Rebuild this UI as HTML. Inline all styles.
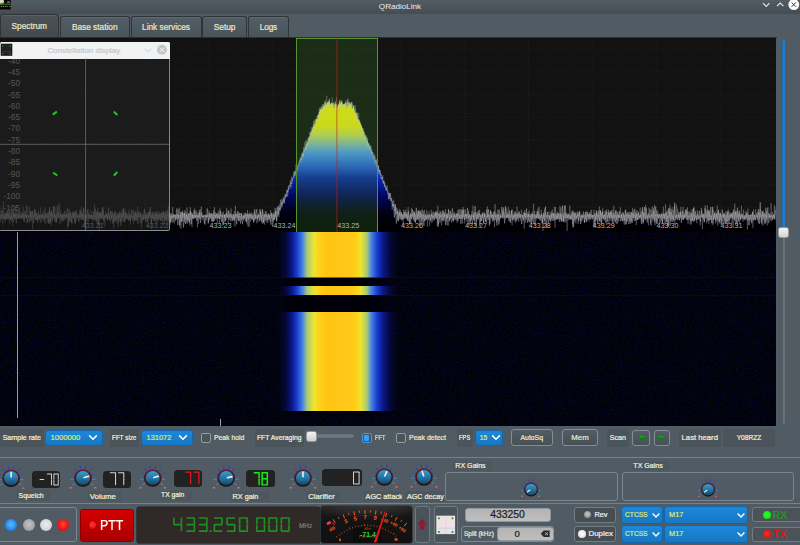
<!DOCTYPE html>
<html><head><meta charset="utf-8"><title>QRadioLink</title>
<style>
*{box-sizing:border-box;margin:0;padding:0}
html,body{width:800px;height:545px;overflow:hidden;background:#515b63;font-family:"Liberation Sans",sans-serif;}
#root{position:relative;width:800px;height:545px;overflow:hidden;background:#515b63;color:#ececd2;font-size:8px;-webkit-text-stroke:0.22px currentColor}
.abs{position:absolute}
#titlebar{left:0;top:0;width:800px;height:13.5px;background:linear-gradient(#535d65,#4a5359 60%,#454d53)}
#title{left:0;top:0;width:800px;text-align:center;color:#eceff1;font-size:8.1px;line-height:13px;height:13px;-webkit-text-stroke:0}
.tab{position:absolute;top:16px;height:20.5px;border:1px solid #2e3438;border-bottom:none;border-radius:3px 3px 0 0;background:linear-gradient(#535d65,#4a545b);color:#e9e7c6;font-size:8.3px;text-align:center;line-height:20px;box-shadow:inset 0 1px 0 #5f6971}
.tab.sel{top:13.5px;height:23.5px;background:linear-gradient(#4a5257,#444b4f);line-height:23.5px;box-shadow:inset 0 1px 0 #59636a}
#plot{left:0;top:38px;width:776px;height:194px;background:#121212;overflow:hidden}
#wf{left:0;top:232px;width:776px;height:193.5px;background:#010108;overflow:hidden}
.band{position:absolute;left:270px;width:136px;background:linear-gradient(90deg,rgba(3,3,26,0) 8px,#050838 16px,#0a1888 22px,#1a3cd0 27px,#4a8ae0 33px,#a8c878 37px,#ece430 44px,#ffd018 50px,#ffc414 56px,#ffc818 80px,#ffd018 86px,#ece430 91px,#a8c878 97px,#4a8ae0 101px,#1a3cd0 107px,#0a1888 113px,#050838 120px,rgba(3,3,26,0) 128px)}
.gap{position:absolute;left:279px;width:110px;background:linear-gradient(90deg,rgba(0,0,8,0),#00000a 14px,#00000a 96px,rgba(0,0,8,0))}
.lbl{position:absolute;height:11px;border-radius:2.5px;background:#4d575e;box-shadow:0 0 0 0.5px #566068;color:#efefd8;text-align:left;padding-left:2.6px;white-space:nowrap;overflow:hidden}
.lbl2{position:absolute;border-radius:2.5px;background:#4b545a;color:#efefd8;text-align:center;white-space:nowrap}
.combo{position:absolute;border-radius:3px;background:linear-gradient(#1c88da,#1877c2);border:1px solid #1466a8;color:#dde96e;white-space:nowrap}
.combo svg{position:absolute}
.btn{position:absolute;border-radius:3px;border:1px solid #838d94;background:linear-gradient(#525c64,#475057);color:#e8e8cc;text-align:center;white-space:nowrap}
.lcd{position:absolute;background:#222222;border-radius:3.5px}
.chk{position:absolute;width:10px;height:10px;border:1px solid #92a092;border-radius:2px;background:#4a545c}
.grp{position:absolute;border:1px solid #7b858c;border-radius:3px}
.edit{position:absolute;background:linear-gradient(#b4b4b4,#bebebe);border-radius:3px;border:1px solid #8e979d;color:#1c1c1c;text-align:center}
.led{position:absolute;border-radius:50%}
</style></head><body><div id="root">

<!-- title bar -->
<div id="titlebar" class="abs"></div>
<div id="title" class="abs">QRadioLink</div>
<svg class="abs" style="left:0;top:0" width="12" height="10" viewBox="0 0 12 10"><rect width="10.8" height="9.5" fill="#050505"/><path d="M0 0 H3.6 L4.2 2.2 L2.6 3.6 L0 4 Z" fill="#d8dcc0"/><path d="M0 3.2 L3.4 2.6 L4.2 4.4 L0 4.8 Z" fill="#6a8a3a"/><rect x="4.2" y="3.6" width="6.4" height="1.2" fill="#1a7a6a"/><rect x="7.2" y="1.4" width="2.6" height="1.4" fill="#8a9a20"/><path d="M0.8 6.4 H7.6 M9.4 6.4 H10.6" stroke="#b8a818" stroke-width="1" stroke-dasharray="1.2 0.7"/></svg>
<svg class="abs" style="left:755px;top:0" width="45" height="12" viewBox="0 0 45 12">
 <path d="M8 3.2 L11.2 6.4 L14.4 3.2" stroke="#e6e9eb" stroke-width="1.1" fill="none"/>
 <path d="M22 6.2 L25.2 3 L28.4 6.2" stroke="#e6e9eb" stroke-width="1.1" fill="none"/>
 <circle cx="38.8" cy="4.6" r="5.4" fill="#fbfbfb"/>
 <path d="M36.6 2.4 L41 6.8 M41 2.4 L36.6 6.8" stroke="#3c444a" stroke-width="1" fill="none"/>
</svg>

<!-- tabs -->
<div class="abs" style="left:0;top:36.5px;width:777px;height:1.5px;background:#2b3034"></div>
<div class="tab sel" style="left:0;width:58.5px">Spectrum</div>
<div class="tab" style="left:60px;width:69.5px">Base station</div>
<div class="tab" style="left:130.5px;width:71px">Link services</div>
<div class="tab" style="left:202px;width:45.2px">Setup</div>
<div class="tab" style="left:248px;width:40.8px;letter-spacing:-.12px">Logs</div>

<!-- spectrum plot -->
<div id="plot" class="abs">
<svg class="abs" style="left:0;top:0" width="776" height="194" viewBox="0 0 776 194">
 <defs>
  <linearGradient id="sg" x1="0" y1="0" x2="0" y2="194" gradientUnits="userSpaceOnUse">
   <stop offset="0" stop-color="#ffffff"/>
   <stop offset="0.30" stop-color="#ffff14"/>
   <stop offset="0.45" stop-color="#fffa18"/>
   <stop offset="0.50" stop-color="#d8ec60"/>
   <stop offset="0.548" stop-color="#90c8c0"/>
   <stop offset="0.595" stop-color="#529eff"/>
   <stop offset="0.66" stop-color="#2866e8"/>
   <stop offset="0.72" stop-color="#0a29b4"/>
   <stop offset="0.81" stop-color="#000766"/>
   <stop offset="0.90" stop-color="#000112"/>
   <stop offset="1" stop-color="#000000"/>
  </linearGradient>
 </defs>
 <g stroke="#202020" stroke-width="1" stroke-dasharray="1 2" fill="none">
 <line x1="81.5" y1="0" x2="81.5" y2="194" />
<line x1="145.4" y1="0" x2="145.4" y2="194" />
<line x1="209.2" y1="0" x2="209.2" y2="194" />
<line x1="273.1" y1="0" x2="273.1" y2="194" />
<line x1="336.9" y1="0" x2="336.9" y2="194" />
<line x1="400.8" y1="0" x2="400.8" y2="194" />
<line x1="464.7" y1="0" x2="464.7" y2="194" />
<line x1="528.5" y1="0" x2="528.5" y2="194" />
<line x1="592.4" y1="0" x2="592.4" y2="194" />
<line x1="656.2" y1="0" x2="656.2" y2="194" />
<line x1="720.1" y1="0" x2="720.1" y2="194" />
<line x1="0" y1="11.2" x2="776" y2="11.2" />
<line x1="0" y1="33.8" x2="776" y2="33.8" />
<line x1="0" y1="56.4" x2="776" y2="56.4" />
<line x1="0" y1="79.0" x2="776" y2="79.0" />
<line x1="0" y1="101.6" x2="776" y2="101.6" />
<line x1="0" y1="124.2" x2="776" y2="124.2" />
<line x1="0" y1="146.8" x2="776" y2="146.8" />
<line x1="0" y1="169.4" x2="776" y2="169.4" />
<line x1="0" y1="192.0" x2="776" y2="192.0" />
 </g>
 <polygon points="0,194 0.0,179.0 0.6,179.0 1.1,178.9 1.7,178.7 2.2,178.1 2.8,176.9 3.3,180.0 3.8,179.0 4.4,180.0 4.9,177.9 5.5,178.4 6.0,177.6 6.6,178.0 7.1,177.2 7.7,178.0 8.2,177.8 8.8,179.1 9.3,179.4 9.9,177.3 10.5,179.8 11.0,178.0 11.6,178.2 12.1,179.0 12.7,178.4 13.2,179.4 13.8,178.9 14.3,179.0 14.9,178.2 15.4,177.9 16.0,178.0 16.5,179.9 17.1,179.0 17.6,179.5 18.2,178.6 18.7,179.4 19.3,177.5 19.8,178.2 20.4,176.7 20.9,179.1 21.5,178.3 22.0,179.2 22.6,178.8 23.1,178.8 23.7,179.1 24.2,178.8 24.8,178.5 25.3,178.7 25.9,180.2 26.4,178.8 27.0,179.4 27.5,178.3 28.1,179.4 28.6,177.4 29.2,179.1 29.7,178.3 30.3,177.2 30.8,178.4 31.4,179.2 31.9,178.2 32.5,178.3 33.0,179.1 33.6,179.7 34.1,177.6 34.7,178.1 35.2,177.7 35.8,178.6 36.3,179.9 36.9,179.1 37.4,178.0 37.9,180.1 38.5,179.8 39.0,177.8 39.6,178.6 40.1,177.6 40.7,179.2 41.2,179.2 41.8,179.7 42.3,178.7 42.9,179.3 43.4,178.0 44.0,178.5 44.5,178.6 45.1,178.5 45.6,178.7 46.2,179.5 46.7,178.1 47.3,179.2 47.8,178.4 48.4,178.0 48.9,178.5 49.5,178.8 50.0,178.0 50.6,178.3 51.1,177.9 51.7,179.2 52.2,178.9 52.8,176.6 53.3,177.2 53.9,176.9 54.4,178.2 55.0,178.4 55.5,179.0 56.1,179.2 56.6,178.6 57.2,178.6 57.7,178.5 58.3,176.2 58.8,178.8 59.4,179.0 59.9,177.6 60.5,180.1 61.0,178.1 61.6,178.7 62.1,177.3 62.7,178.2 63.2,178.7 63.8,178.2 64.3,178.4 64.9,178.7 65.4,179.2 66.0,179.5 66.5,178.6 67.1,178.6 67.6,179.4 68.2,179.5 68.7,178.6 69.3,178.4 69.8,179.9 70.4,177.8 70.9,178.7 71.5,177.8 72.0,179.4 72.6,177.9 73.1,179.5 73.7,178.7 74.2,178.3 74.8,178.3 75.3,178.5 75.9,178.5 76.4,178.5 77.0,178.7 77.5,179.7 78.1,177.2 78.6,177.9 79.2,178.5 79.7,178.3 80.3,177.7 80.8,178.0 81.4,178.5 81.9,177.4 82.5,177.2 83.0,178.6 83.6,179.5 84.1,177.6 84.7,178.5 85.2,177.4 85.8,178.2 86.3,178.9 86.9,177.9 87.4,178.3 88.0,178.7 88.5,177.6 89.1,179.1 89.6,179.6 90.2,179.8 90.7,177.8 91.3,178.7 91.8,178.1 92.4,178.4 92.9,176.4 93.5,179.1 94.0,179.7 94.6,178.2 95.1,177.5 95.7,177.9 96.2,178.5 96.8,178.7 97.3,179.2 97.9,178.5 98.4,179.9 99.0,178.1 99.5,180.6 100.1,179.2 100.6,178.6 101.2,180.6 101.7,179.6 102.3,180.1 102.8,177.3 103.4,178.1 103.9,178.9 104.5,177.2 105.0,179.1 105.6,178.6 106.1,176.0 106.7,177.9 107.2,178.8 107.8,180.4 108.3,180.4 108.9,178.7 109.4,178.9 110.0,179.2 110.5,177.5 111.1,179.1 111.6,178.8 112.2,178.4 112.7,177.2 113.3,179.2 113.8,179.2 114.4,178.4 114.9,177.9 115.5,178.5 116.0,176.9 116.6,178.9 117.1,178.3 117.7,177.2 118.2,178.8 118.8,180.5 119.3,178.9 119.9,177.4 120.4,179.0 121.0,178.9 121.5,178.6 122.1,178.2 122.6,178.6 123.2,178.2 123.7,178.6 124.3,178.8 124.8,178.2 125.4,179.2 125.9,177.1 126.5,180.8 127.0,177.9 127.6,177.7 128.1,178.5 128.7,179.2 129.2,179.2 129.8,178.4 130.3,179.7 130.9,175.4 131.4,179.0 132.0,178.3 132.5,179.1 133.1,178.6 133.6,180.3 134.2,178.4 134.7,177.0 135.3,178.8 135.8,178.2 136.4,178.4 136.9,177.1 137.5,179.3 138.0,176.6 138.6,180.7 139.1,179.9 139.7,178.6 140.2,177.9 140.8,178.6 141.3,177.9 141.9,179.5 142.4,178.3 143.0,176.8 143.5,178.0 144.1,179.7 144.6,179.9 145.2,178.6 145.7,180.7 146.3,178.4 146.8,179.1 147.4,178.7 147.9,177.6 148.5,177.4 149.0,177.9 149.6,179.6 150.2,179.2 150.7,177.7 151.3,180.2 151.8,180.1 152.4,178.5 152.9,176.9 153.5,178.7 154.0,180.7 154.6,178.1 155.1,178.7 155.7,178.4 156.2,178.1 156.8,179.0 157.3,177.7 157.9,178.6 158.4,179.2 159.0,177.4 159.5,179.2 160.1,178.8 160.6,178.9 161.2,178.3 161.7,179.2 162.3,178.5 162.8,177.9 163.4,179.3 163.9,177.8 164.5,178.6 165.0,178.3 165.6,179.3 166.1,179.6 166.7,179.2 167.2,178.4 167.8,177.6 168.3,179.2 168.9,177.8 169.4,179.8 170.0,179.5 170.5,179.1 171.1,178.4 171.6,179.9 172.2,178.8 172.7,178.9 173.3,177.8 173.8,179.4 174.4,179.1 174.9,178.6 175.5,178.5 176.0,177.5 176.6,178.6 177.1,178.7 177.7,178.5 178.2,179.2 178.8,178.5 179.3,180.0 179.9,176.2 180.4,178.0 181.0,178.6 181.5,179.9 182.1,178.8 182.6,180.1 183.2,178.0 183.7,178.2 184.3,178.5 184.8,180.3 185.4,178.2 185.9,179.2 186.5,179.9 187.0,177.6 187.6,178.4 188.1,177.8 188.7,178.1 189.2,178.7 189.8,179.0 190.3,176.5 190.9,177.8 191.4,179.5 192.0,178.3 192.5,179.8 193.1,178.8 193.6,179.7 194.2,179.7 194.7,180.1 195.3,178.8 195.8,177.4 196.4,178.6 196.9,178.2 197.5,179.2 198.0,180.4 198.6,178.9 199.1,178.6 199.7,179.0 200.2,178.4 200.8,179.2 201.3,179.1 201.9,178.4 202.4,177.5 203.0,178.7 203.5,178.8 204.1,177.1 204.6,177.8 205.2,179.1 205.7,179.8 206.3,180.3 206.8,180.0 207.4,177.7 207.9,179.1 208.5,177.5 209.0,178.4 209.6,176.8 210.1,177.3 210.7,179.7 211.2,178.2 211.8,178.1 212.3,178.5 212.9,177.5 213.4,179.0 214.0,177.0 214.5,179.2 215.1,178.4 215.6,178.7 216.2,177.3 216.7,178.0 217.3,179.4 217.8,179.4 218.4,179.9 218.9,180.6 219.5,177.5 220.0,179.1 220.6,177.4 221.1,178.2 221.7,178.5 222.2,176.0 222.8,178.6 223.3,178.5 223.9,180.7 224.4,179.9 225.0,179.3 225.5,177.1 226.1,177.9 226.6,179.7 227.2,178.4 227.7,180.4 228.3,179.8 228.8,178.8 229.4,177.2 229.9,179.0 230.5,177.2 231.0,179.1 231.6,179.2 232.1,179.1 232.7,176.8 233.2,179.1 233.8,178.4 234.3,180.8 234.9,179.9 235.4,180.2 236.0,177.5 236.5,178.2 237.1,178.7 237.6,177.2 238.2,177.8 238.7,177.9 239.3,178.0 239.8,177.6 240.4,176.7 240.9,176.8 241.5,177.7 242.0,178.2 242.6,177.1 243.1,179.4 243.7,177.9 244.2,178.3 244.8,177.6 245.3,178.5 245.9,179.8 246.4,178.4 247.0,178.1 247.5,177.2 248.1,179.7 248.6,177.7 249.2,180.3 249.7,178.8 250.3,178.6 250.8,177.7 251.4,180.0 251.9,178.4 252.5,178.9 253.0,176.9 253.6,178.7 254.1,178.3 254.7,177.0 255.2,179.6 255.8,177.8 256.3,179.4 256.9,178.8 257.4,179.2 258.0,178.6 258.5,177.8 259.1,178.3 259.6,177.6 260.2,177.4 260.7,178.1 261.3,178.8 261.8,177.7 262.4,177.6 262.9,177.7 263.5,176.8 264.0,178.0 264.6,178.2 265.1,177.7 265.7,179.0 266.2,178.8 266.8,178.5 267.3,178.4 267.9,178.7 268.4,177.7 269.0,178.3 269.5,178.2 270.1,176.5 270.6,178.2 271.2,178.2 271.7,177.6 272.3,178.9 272.8,177.4 273.4,178.4 273.9,179.4 274.5,177.5 275.0,177.0 275.6,177.6 276.1,175.8 276.7,176.3 277.2,175.3 277.8,174.7 278.3,173.1 278.9,172.4 279.4,171.1 280.0,170.5 280.5,170.4 281.1,169.1 281.6,167.0 282.2,165.0 282.7,164.9 283.3,164.8 283.8,163.5 284.4,159.7 284.9,160.4 285.5,158.7 286.0,156.2 286.6,155.4 287.1,154.6 287.7,152.1 288.2,151.7 288.8,150.7 289.3,148.6 289.9,147.9 290.4,146.4 291.0,146.6 291.5,144.6 292.1,142.4 292.6,140.3 293.2,139.0 293.7,138.7 294.3,135.1 294.8,135.1 295.4,133.1 295.9,133.2 296.5,133.7 297.0,129.8 297.6,128.7 298.1,126.9 298.7,127.2 299.2,126.0 299.8,123.2 300.3,122.6 300.9,120.9 301.4,120.3 302.0,118.6 302.5,115.6 303.1,116.0 303.6,113.0 304.2,111.9 304.7,111.7 305.3,107.8 305.8,109.1 306.4,106.5 306.9,104.9 307.5,104.8 308.0,103.6 308.6,100.1 309.1,99.2 309.7,98.5 310.2,97.7 310.8,94.0 311.3,94.8 311.9,91.3 312.4,91.3 313.0,89.0 313.5,87.1 314.1,87.9 314.6,85.6 315.2,86.2 315.7,83.2 316.3,81.2 316.8,80.8 317.4,80.8 317.9,77.0 318.5,77.4 319.0,74.6 319.6,72.9 320.1,71.8 320.7,71.3 321.2,70.2 321.8,71.5 322.3,70.4 322.9,69.3 323.4,67.8 324.0,66.9 324.5,68.7 325.1,65.0 325.6,64.9 326.2,65.9 326.7,67.3 327.3,63.6 327.8,64.7 328.4,62.9 328.9,64.0 329.5,59.7 330.0,66.0 330.6,66.8 331.1,65.7 331.7,63.7 332.2,67.0 332.8,65.2 333.3,64.4 333.9,70.1 334.4,69.2 335.0,61.7 335.5,64.5 336.1,67.3 336.6,65.6 337.2,68.3 337.7,70.3 338.3,65.1 338.8,67.0 339.4,63.6 339.9,61.4 340.5,67.1 341.0,60.7 341.6,64.3 342.1,63.8 342.7,67.1 343.2,66.9 343.8,65.7 344.3,66.8 344.9,65.0 345.4,63.8 346.0,66.5 346.5,70.8 347.1,61.6 347.6,67.4 348.2,68.7 348.7,62.8 349.3,66.4 349.8,63.5 350.4,65.2 350.9,67.1 351.5,63.6 352.0,70.7 352.6,69.6 353.1,69.1 353.7,66.2 354.2,71.7 354.8,73.4 355.3,74.6 355.9,75.0 356.4,75.2 357.0,77.2 357.5,79.1 358.1,81.9 358.6,81.2 359.2,83.0 359.7,83.7 360.3,84.6 360.8,86.6 361.4,87.3 361.9,89.4 362.5,89.8 363.0,93.0 363.6,93.2 364.1,94.7 364.7,97.6 365.2,97.0 365.8,99.2 366.3,99.7 366.9,102.3 367.4,102.2 368.0,103.4 368.5,106.1 369.1,106.3 369.6,108.3 370.2,109.2 370.7,109.8 371.3,112.7 371.8,113.5 372.4,114.9 372.9,118.3 373.5,118.5 374.0,120.4 374.6,120.9 375.1,122.6 375.7,124.6 376.2,123.3 376.8,127.6 377.3,128.7 377.9,129.8 378.4,130.2 379.0,131.7 379.5,133.2 380.1,134.4 380.6,136.3 381.2,139.0 381.7,138.8 382.3,139.5 382.8,141.6 383.4,142.3 383.9,143.8 384.5,144.5 385.0,147.0 385.6,148.3 386.1,150.1 386.7,151.3 387.2,151.4 387.8,154.6 388.3,154.5 388.9,154.5 389.4,158.4 390.0,158.2 390.5,161.8 391.1,161.0 391.6,163.9 392.2,165.4 392.7,163.8 393.3,165.3 393.8,168.5 394.4,169.0 394.9,169.8 395.5,171.9 396.0,172.5 396.6,171.3 397.1,172.5 397.7,175.2 398.2,175.0 398.8,175.6 399.3,176.5 399.9,177.8 400.4,178.2 401.0,177.5 401.5,177.7 402.1,178.5 402.6,178.7 403.2,177.7 403.7,177.7 404.3,177.3 404.8,177.7 405.4,179.0 405.9,179.2 406.5,177.9 407.0,178.5 407.6,179.9 408.1,179.2 408.7,178.8 409.2,178.1 409.8,178.1 410.3,179.2 410.9,177.3 411.4,178.3 412.0,177.5 412.5,176.6 413.1,178.4 413.6,178.0 414.2,178.1 414.7,177.6 415.3,178.8 415.8,179.4 416.4,179.0 416.9,177.6 417.5,179.2 418.0,178.0 418.6,178.1 419.1,176.6 419.7,179.4 420.2,178.1 420.8,177.4 421.3,178.4 421.9,179.0 422.4,180.3 423.0,178.4 423.5,179.2 424.1,176.9 424.6,179.0 425.2,179.4 425.7,179.2 426.3,177.5 426.8,177.7 427.4,178.4 427.9,179.1 428.5,178.5 429.0,177.6 429.6,178.4 430.1,177.8 430.7,178.5 431.2,177.8 431.8,178.5 432.3,177.6 432.9,178.1 433.4,179.8 434.0,178.8 434.5,177.4 435.1,178.6 435.6,179.8 436.2,179.1 436.7,177.8 437.3,178.8 437.8,177.4 438.4,178.0 438.9,177.9 439.5,177.8 440.0,178.2 440.6,179.4 441.1,179.3 441.7,178.7 442.2,179.3 442.8,178.4 443.3,179.2 443.9,178.7 444.4,177.8 445.0,179.2 445.5,178.8 446.1,179.7 446.6,180.2 447.2,179.1 447.7,179.2 448.3,180.1 448.8,178.2 449.4,178.6 449.9,180.4 450.5,179.0 451.0,180.3 451.6,178.4 452.1,177.6 452.7,178.2 453.2,178.8 453.8,179.7 454.3,178.2 454.9,178.8 455.4,179.0 456.0,179.4 456.5,176.7 457.1,179.0 457.6,177.8 458.2,177.3 458.7,177.8 459.3,178.9 459.8,177.1 460.4,179.0 460.9,178.7 461.5,178.1 462.0,177.9 462.6,179.0 463.1,178.5 463.7,178.8 464.2,178.3 464.8,179.5 465.3,177.7 465.9,177.7 466.4,177.9 467.0,178.2 467.5,177.1 468.1,177.8 468.6,179.0 469.2,179.6 469.7,177.8 470.3,178.3 470.8,178.8 471.4,178.8 471.9,179.6 472.5,179.2 473.0,179.2 473.6,180.3 474.1,178.2 474.7,178.0 475.2,177.4 475.8,176.8 476.3,179.3 476.9,178.8 477.4,177.6 478.0,179.4 478.5,178.8 479.1,178.1 479.6,178.4 480.2,178.6 480.7,178.5 481.3,177.5 481.8,177.9 482.4,178.7 482.9,177.9 483.5,177.2 484.0,179.9 484.6,177.7 485.1,177.8 485.7,178.2 486.2,178.8 486.8,177.3 487.3,177.3 487.9,178.5 488.4,178.3 489.0,179.3 489.5,178.6 490.1,179.8 490.6,177.3 491.2,179.8 491.7,178.9 492.3,177.0 492.8,179.1 493.4,178.2 493.9,178.9 494.5,178.1 495.0,178.1 495.6,178.2 496.1,178.0 496.7,178.2 497.2,179.3 497.8,178.6 498.3,178.6 498.9,179.4 499.4,178.3 500.0,178.9 500.5,178.4 501.1,178.9 501.6,179.5 502.2,179.7 502.7,178.4 503.3,178.7 503.8,177.6 504.4,178.1 504.9,178.1 505.5,178.8 506.0,177.9 506.6,178.2 507.1,178.6 507.7,179.2 508.2,179.3 508.8,177.7 509.3,178.1 509.9,179.8 510.4,178.1 511.0,176.3 511.5,178.8 512.1,178.0 512.6,177.9 513.2,179.4 513.7,178.3 514.3,178.0 514.8,179.8 515.4,179.9 515.9,177.0 516.5,178.6 517.0,178.5 517.6,178.6 518.1,177.7 518.7,180.0 519.2,177.6 519.8,179.1 520.3,178.4 520.9,179.3 521.4,179.0 522.0,178.7 522.5,178.5 523.1,177.9 523.6,178.5 524.2,178.1 524.7,178.7 525.3,177.4 525.8,177.9 526.4,176.7 526.9,177.8 527.5,177.4 528.0,179.4 528.6,178.8 529.1,178.4 529.7,179.2 530.2,178.6 530.8,178.8 531.3,179.0 531.9,179.9 532.4,178.2 533.0,178.3 533.5,177.2 534.1,177.6 534.6,178.9 535.2,179.2 535.7,179.9 536.3,178.9 536.8,177.5 537.4,176.2 537.9,179.3 538.5,178.9 539.0,178.1 539.6,178.2 540.1,177.2 540.7,177.8 541.2,178.9 541.8,178.5 542.3,178.5 542.9,177.5 543.4,177.7 544.0,178.9 544.5,179.4 545.1,178.2 545.6,177.5 546.2,177.8 546.7,176.9 547.3,176.0 547.8,179.6 548.4,178.6 548.9,177.2 549.5,178.5 550.0,178.6 550.6,178.9 551.1,180.4 551.7,179.0 552.2,178.2 552.8,181.1 553.3,177.9 553.9,178.7 554.4,179.4 555.0,179.5 555.5,179.6 556.1,178.0 556.6,179.5 557.2,180.0 557.7,181.3 558.3,178.3 558.8,178.0 559.4,177.8 559.9,178.7 560.5,177.4 561.0,177.6 561.6,177.9 562.1,178.1 562.7,178.5 563.2,178.5 563.8,179.7 564.3,179.7 564.9,180.2 565.4,176.8 566.0,177.2 566.5,179.4 567.1,178.8 567.6,178.2 568.2,179.2 568.7,178.0 569.3,178.5 569.8,178.5 570.4,180.8 570.9,177.8 571.5,178.8 572.0,179.1 572.6,178.6 573.1,178.2 573.7,178.3 574.2,179.0 574.8,178.3 575.3,178.8 575.9,178.5 576.4,179.7 577.0,179.1 577.5,177.2 578.1,178.9 578.6,177.6 579.2,178.5 579.7,177.6 580.3,178.5 580.8,177.6 581.4,179.2 581.9,177.8 582.5,178.3 583.0,180.5 583.6,177.4 584.1,179.0 584.7,178.3 585.2,177.9 585.8,177.6 586.3,176.8 586.9,178.7 587.4,178.1 588.0,178.9 588.5,177.5 589.1,179.0 589.6,177.6 590.2,177.1 590.7,177.7 591.3,179.4 591.8,178.6 592.4,178.4 592.9,177.8 593.5,180.2 594.0,177.2 594.6,179.2 595.1,178.7 595.7,179.6 596.2,179.2 596.8,179.2 597.3,178.2 597.9,177.7 598.4,178.8 599.0,179.3 599.5,177.6 600.1,178.7 600.6,179.0 601.2,178.9 601.7,177.3 602.2,178.7 602.8,178.0 603.3,178.9 603.9,178.1 604.4,177.3 605.0,177.5 605.5,179.1 606.1,176.8 606.6,179.4 607.2,179.2 607.7,180.3 608.3,178.4 608.8,177.3 609.4,179.1 609.9,179.2 610.5,178.1 611.0,180.4 611.6,178.7 612.1,179.1 612.7,180.1 613.2,176.9 613.8,179.1 614.3,178.3 614.9,178.3 615.4,179.0 616.0,178.0 616.5,178.5 617.1,179.1 617.6,180.1 618.2,178.7 618.7,178.2 619.3,180.5 619.8,178.8 620.4,178.9 620.9,179.7 621.5,178.3 622.0,180.0 622.6,176.1 623.1,178.7 623.7,179.6 624.2,178.8 624.8,178.1 625.3,179.9 625.9,178.1 626.4,179.7 627.0,178.3 627.5,177.6 628.1,178.8 628.6,177.4 629.2,178.4 629.7,178.3 630.3,178.3 630.8,178.7 631.4,179.9 631.9,179.0 632.5,178.0 633.0,178.6 633.6,179.2 634.1,178.1 634.7,178.0 635.2,178.2 635.8,177.8 636.3,179.5 636.9,178.5 637.4,178.6 638.0,178.5 638.5,178.8 639.1,180.3 639.6,178.4 640.2,178.6 640.7,177.9 641.3,179.1 641.8,178.4 642.4,179.1 642.9,177.6 643.5,178.8 644.0,178.5 644.6,177.0 645.1,177.6 645.7,178.6 646.2,178.7 646.8,177.2 647.3,178.9 647.9,179.3 648.4,178.5 649.0,178.5 649.5,177.2 650.1,177.3 650.6,179.3 651.2,180.5 651.7,178.0 652.3,177.7 652.8,177.1 653.4,179.2 653.9,177.9 654.5,178.1 655.0,178.2 655.6,177.9 656.1,178.7 656.7,177.8 657.2,179.5 657.8,176.5 658.3,178.7 658.9,177.8 659.4,177.1 660.0,178.5 660.5,179.1 661.1,179.0 661.6,177.5 662.2,178.9 662.7,179.0 663.3,179.4 663.8,179.2 664.4,179.0 664.9,177.3 665.5,178.5 666.0,178.5 666.6,179.4 667.1,178.2 667.7,179.3 668.2,177.9 668.8,179.9 669.3,178.2 669.9,179.3 670.4,177.4 671.0,178.3 671.5,178.5 672.1,179.1 672.6,178.2 673.2,177.6 673.7,178.7 674.3,177.9 674.8,177.9 675.4,177.2 675.9,177.8 676.5,179.7 677.0,177.2 677.6,178.2 678.1,179.0 678.7,177.1 679.2,179.3 679.8,179.8 680.3,178.8 680.9,180.1 681.4,179.2 682.0,179.2 682.5,178.9 683.1,180.0 683.6,180.4 684.2,177.4 684.7,179.0 685.3,178.7 685.8,177.8 686.4,178.0 686.9,178.0 687.5,178.9 688.0,180.2 688.6,178.8 689.1,177.1 689.7,178.1 690.2,176.6 690.8,177.0 691.3,178.0 691.9,179.5 692.4,180.2 693.0,178.3 693.5,179.1 694.1,178.5 694.6,178.1 695.2,180.2 695.7,178.1 696.3,177.4 696.8,177.6 697.4,177.0 697.9,177.2 698.5,178.8 699.0,177.9 699.6,178.9 700.1,178.2 700.7,178.2 701.2,178.6 701.8,179.1 702.3,177.9 702.9,178.9 703.4,179.2 704.0,180.1 704.5,177.1 705.1,178.8 705.6,178.6 706.2,177.3 706.7,178.4 707.3,176.3 707.8,178.3 708.4,178.9 708.9,178.9 709.5,178.7 710.0,178.9 710.6,177.4 711.1,179.8 711.7,179.6 712.2,178.2 712.8,177.8 713.3,178.7 713.9,177.3 714.4,178.9 715.0,178.5 715.5,180.0 716.1,178.6 716.6,179.8 717.2,178.4 717.7,178.7 718.3,179.2 718.8,179.2 719.4,176.4 719.9,179.1 720.5,176.9 721.0,178.6 721.6,178.6 722.1,177.5 722.7,178.4 723.2,177.2 723.8,178.0 724.3,178.0 724.9,178.2 725.4,178.8 726.0,177.6 726.5,178.8 727.1,177.2 727.6,177.4 728.2,180.0 728.7,178.8 729.3,179.4 729.8,177.4 730.4,178.6 730.9,178.3 731.5,178.2 732.0,178.0 732.6,179.0 733.1,180.0 733.7,180.0 734.2,178.5 734.8,177.2 735.3,177.9 735.9,177.7 736.4,178.6 737.0,179.4 737.5,178.8 738.1,178.6 738.6,179.4 739.2,178.3 739.7,179.3 740.3,178.2 740.8,179.9 741.4,177.0 741.9,178.5 742.5,177.4 743.0,178.8 743.6,176.9 744.1,176.6 744.7,178.3 745.2,177.7 745.8,180.4 746.3,177.8 746.9,179.1 747.4,179.4 748.0,177.9 748.5,178.4 749.1,179.4 749.6,177.2 750.2,177.0 750.7,177.4 751.3,177.8 751.8,179.3 752.4,179.4 752.9,178.0 753.5,177.8 754.0,178.8 754.6,178.4 755.1,175.8 755.7,179.0 756.2,177.0 756.8,178.7 757.3,179.2 757.9,177.6 758.4,177.7 759.0,178.6 759.5,178.8 760.1,178.2 760.6,177.9 761.2,179.4 761.7,179.0 762.3,178.2 762.8,178.8 763.4,177.2 763.9,178.6 764.5,178.2 765.0,177.8 765.6,178.8 766.1,179.4 766.7,178.8 767.2,180.2 767.8,178.0 768.3,179.4 768.9,178.9 769.4,179.4 770.0,179.1 770.5,179.1 771.1,178.8 771.6,177.9 772.2,179.2 772.7,178.8 773.3,179.1 773.8,178.7 774.4,178.9 774.9,178.8 775.5,177.8 776,194" fill="url(#sg)"/>
 <polyline points="0.0,176.7 0.6,184.3 1.1,170.5 1.7,181.0 2.2,176.8 2.8,187.0 3.3,163.4 3.8,179.7 4.4,174.8 4.9,184.9 5.5,175.3 6.0,181.2 6.6,173.5 7.1,181.1 7.7,172.8 8.2,179.6 8.8,174.3 9.3,185.6 9.9,177.3 10.5,181.9 11.0,173.4 11.6,184.1 12.1,171.1 12.7,187.8 13.2,170.3 13.8,184.1 14.3,175.5 14.9,180.4 15.4,168.6 16.0,181.6 16.5,171.7 17.1,180.8 17.6,177.3 18.2,179.1 18.7,173.8 19.3,181.2 19.8,177.2 20.4,180.9 20.9,174.2 21.5,181.3 22.0,175.7 22.6,180.4 23.1,168.5 23.7,181.2 24.2,176.3 24.8,184.4 25.3,176.0 25.9,179.9 26.4,166.5 27.0,185.3 27.5,168.6 28.1,179.4 28.6,177.1 29.2,180.7 29.7,168.7 30.3,182.3 30.8,173.4 31.4,179.8 31.9,173.0 32.5,190.8 33.0,177.3 33.6,181.0 34.1,175.0 34.7,179.7 35.2,171.0 35.8,182.0 36.3,173.7 36.9,182.9 37.4,177.4 37.9,185.0 38.5,172.6 39.0,181.5 39.6,177.4 40.1,182.5 40.7,169.2 41.2,180.0 41.8,177.5 42.3,181.3 42.9,174.7 43.4,183.1 44.0,172.1 44.5,184.1 45.1,169.5 45.6,186.5 46.2,175.3 46.7,179.6 47.3,177.9 47.8,185.1 48.4,173.6 48.9,184.7 49.5,172.4 50.0,185.9 50.6,174.5 51.1,187.5 51.7,174.2 52.2,179.2 52.8,175.8 53.3,180.6 53.9,168.8 54.4,183.6 55.0,169.0 55.5,184.2 56.1,176.5 56.6,185.0 57.2,173.7 57.7,180.8 58.3,174.9 58.8,179.2 59.4,177.6 59.9,186.5 60.5,171.7 61.0,183.2 61.6,176.3 62.1,184.7 62.7,176.8 63.2,183.2 63.8,174.6 64.3,182.5 64.9,177.1 65.4,180.6 66.0,176.5 66.5,179.6 67.1,170.3 67.6,181.1 68.2,171.1 68.7,188.0 69.3,170.7 69.8,184.0 70.4,174.8 70.9,181.4 71.5,177.7 72.0,186.9 72.6,176.1 73.1,180.5 73.7,174.4 74.2,184.9 74.8,173.9 75.3,183.7 75.9,174.8 76.4,182.8 77.0,175.3 77.5,179.8 78.1,177.9 78.6,182.5 79.2,175.2 79.7,180.0 80.3,172.8 80.8,180.1 81.4,169.0 81.9,182.0 82.5,174.9 83.0,181.6 83.6,170.8 84.1,183.7 84.7,177.5 85.2,179.2 85.8,177.0 86.3,179.1 86.9,177.5 87.4,184.5 88.0,170.8 88.5,184.1 89.1,175.7 89.6,181.4 90.2,177.1 90.7,180.9 91.3,172.8 91.8,181.6 92.4,177.1 92.9,184.3 93.5,177.5 94.0,180.6 94.6,166.4 95.1,181.5 95.7,176.9 96.2,182.6 96.8,174.1 97.3,181.4 97.9,170.1 98.4,186.9 99.0,174.7 99.5,192.6 100.1,174.7 100.6,181.2 101.2,175.5 101.7,179.7 102.3,169.7 102.8,181.6 103.4,172.4 103.9,186.4 104.5,177.8 105.0,189.3 105.6,173.7 106.1,180.0 106.7,175.7 107.2,181.3 107.8,175.2 108.3,181.0 108.9,175.4 109.4,182.7 110.0,177.7 110.5,185.0 111.1,173.0 111.6,180.0 112.2,175.5 112.7,185.5 113.3,177.4 113.8,190.1 114.4,173.7 114.9,183.3 115.5,173.2 116.0,183.3 116.6,177.9 117.1,186.1 117.7,176.7 118.2,188.8 118.8,176.7 119.3,179.9 119.9,173.1 120.4,184.3 121.0,175.3 121.5,183.1 122.1,171.4 122.6,182.5 123.2,170.8 123.7,184.6 124.3,174.7 124.8,183.8 125.4,171.6 125.9,181.3 126.5,174.4 127.0,180.5 127.6,177.6 128.1,182.1 128.7,171.9 129.2,181.9 129.8,175.0 130.3,187.0 130.9,176.1 131.4,180.5 132.0,177.9 132.5,182.4 133.1,177.7 133.6,186.1 134.2,174.8 134.7,182.9 135.3,172.8 135.8,181.8 136.4,177.0 136.9,182.3 137.5,168.1 138.0,179.3 138.6,176.2 139.1,179.7 139.7,177.8 140.2,184.9 140.8,174.5 141.3,190.3 141.9,177.9 142.4,181.8 143.0,177.3 143.5,182.4 144.1,172.6 144.6,181.7 145.2,176.8 145.7,185.1 146.3,174.2 146.8,183.6 147.4,174.7 147.9,184.2 148.5,173.9 149.0,181.2 149.6,172.5 150.2,179.2 150.7,173.3 151.3,190.8 151.8,176.9 152.4,181.3 152.9,174.1 153.5,182.9 154.0,173.2 154.6,183.2 155.1,174.4 155.7,181.2 156.2,175.5 156.8,181.1 157.3,172.4 157.9,183.3 158.4,176.3 159.0,181.3 159.5,173.2 160.1,181.5 160.6,174.7 161.2,183.0 161.7,174.9 162.3,183.6 162.8,173.0 163.4,186.8 163.9,174.0 164.5,185.0 165.0,176.2 165.6,182.9 166.1,176.7 166.7,183.3 167.2,174.9 167.8,191.1 168.3,167.8 168.9,184.5 169.4,173.5 170.0,186.6 170.5,176.6 171.1,183.7 171.6,177.8 172.2,184.9 172.7,169.2 173.3,183.9 173.8,176.2 174.4,185.3 174.9,177.0 175.5,182.5 176.0,176.9 176.6,181.3 177.1,176.0 177.7,180.5 178.2,171.3 178.8,180.7 179.3,169.6 179.9,188.9 180.4,176.7 181.0,190.9 181.5,173.7 182.1,183.1 182.6,172.5 183.2,180.1 183.7,175.1 184.3,184.1 184.8,172.1 185.4,181.4 185.9,173.6 186.5,185.2 187.0,169.4 187.6,185.7 188.1,176.8 188.7,183.0 189.2,175.2 189.8,187.4 190.3,169.2 190.9,181.4 191.4,174.1 192.0,189.1 192.5,176.9 193.1,180.5 193.6,176.9 194.2,181.0 194.7,170.6 195.3,180.3 195.8,172.2 196.4,179.2 196.9,173.9 197.5,189.5 198.0,175.1 198.6,185.9 199.1,172.0 199.7,181.1 200.2,171.2 200.8,180.9 201.3,168.5 201.9,179.2 202.4,177.7 203.0,182.3 203.5,177.8 204.1,179.1 204.6,177.0 205.2,186.7 205.7,177.3 206.3,182.4 206.8,177.2 207.4,179.2 207.9,176.3 208.5,184.0 209.0,172.7 209.6,182.1 210.1,176.9 210.7,180.7 211.2,175.1 211.8,183.0 212.3,176.6 212.9,183.9 213.4,172.1 214.0,182.7 214.5,169.2 215.1,181.2 215.6,177.0 216.2,181.6 216.7,175.3 217.3,185.6 217.8,174.5 218.4,180.6 218.9,172.7 219.5,185.0 220.0,170.4 220.6,180.7 221.1,176.6 221.7,179.2 222.2,174.5 222.8,187.5 223.3,173.6 223.9,179.8 224.4,176.3 225.0,184.3 225.5,176.2 226.1,182.2 226.6,170.1 227.2,179.9 227.7,177.1 228.3,186.2 228.8,172.3 229.4,179.2 229.9,176.6 230.5,183.2 231.0,170.4 231.6,182.8 232.1,177.7 232.7,181.7 233.2,175.9 233.8,181.9 234.3,173.1 234.9,188.8 235.4,167.8 236.0,179.6 236.5,176.5 237.1,180.0 237.6,176.1 238.2,182.6 238.7,174.1 239.3,183.3 239.8,177.9 240.4,180.8 240.9,175.1 241.5,182.4 242.0,176.4 242.6,180.6 243.1,177.9 243.7,182.6 244.2,175.2 244.8,179.9 245.3,176.6 245.9,183.5 246.4,175.7 247.0,186.3 247.5,172.2 248.1,188.8 248.6,176.0 249.2,188.8 249.7,174.4 250.3,184.0 250.8,176.5 251.4,180.3 251.9,174.6 252.5,181.6 253.0,176.5 253.6,185.0 254.1,173.6 254.7,182.7 255.2,176.3 255.8,181.3 256.3,177.4 256.9,185.4 257.4,177.2 258.0,184.0 258.5,175.5 259.1,180.1 259.6,171.1 260.2,182.4 260.7,171.3 261.3,181.2 261.8,177.2 262.4,186.0 262.9,172.9 263.5,184.0 264.0,176.2 264.6,186.7 265.1,173.5 265.7,179.3 266.2,173.0 266.8,184.6 267.3,177.5 267.9,185.0 268.4,175.4 269.0,180.8 269.5,177.1 270.1,183.5 270.6,172.2 271.2,179.9 271.7,174.6 272.3,182.3 272.8,177.0 273.4,183.8 273.9,174.8 274.5,181.9 275.0,169.9 275.6,179.5 276.1,170.2 276.7,183.9 277.2,173.4 277.8,178.4 278.3,168.0 278.9,179.1 279.4,166.5 280.0,173.1 280.5,161.7 281.1,170.0 281.6,161.2 282.2,169.0 282.7,162.8 283.3,165.3 283.8,161.0 284.4,165.6 284.9,156.3 285.5,160.4 286.0,155.5 286.6,158.9 287.1,151.5 287.7,158.8 288.2,148.4 288.8,152.0 289.3,147.5 289.9,148.5 290.4,141.9 291.0,150.4 291.5,138.7 292.1,143.1 292.6,140.0 293.2,140.2 293.7,133.4 294.3,138.5 294.8,134.8 295.4,137.4 295.9,126.4 296.5,132.0 297.0,129.4 297.6,132.9 298.1,126.3 298.7,127.9 299.2,121.4 299.8,124.5 300.3,119.0 300.9,124.5 301.4,115.7 302.0,120.6 302.5,113.9 303.1,118.9 303.6,108.8 304.2,114.7 304.7,103.8 305.3,111.4 305.8,105.8 306.4,112.1 306.9,103.0 307.5,109.4 308.0,99.3 308.6,106.2 309.1,98.6 309.7,101.0 310.2,93.6 310.8,98.4 311.3,89.1 311.9,95.5 312.4,89.3 313.0,93.6 313.5,86.1 314.1,88.7 314.6,81.3 315.2,86.6 315.7,81.2 316.3,85.6 316.8,78.5 317.4,80.0 317.9,76.7 318.5,81.1 319.0,74.5 319.6,79.2 320.1,69.6 320.7,75.0 321.2,68.6 321.8,70.6 322.3,66.2 322.9,70.6 323.4,67.2 324.0,69.8 324.5,64.0 325.1,68.1 325.6,64.5 326.2,67.7 326.7,57.9 327.3,68.3 327.8,64.0 328.4,67.2 328.9,61.3 329.5,68.4 330.0,65.8 330.6,67.1 331.1,65.1 331.7,69.8 332.2,59.4 332.8,67.6 333.3,64.0 333.9,70.2 334.4,66.5 335.0,70.2 335.5,65.8 336.1,69.2 336.6,59.2 337.2,69.2 337.7,68.5 338.3,72.3 338.8,67.7 339.4,69.3 339.9,62.5 340.5,68.9 341.0,66.7 341.6,68.2 342.1,62.5 342.7,68.3 343.2,66.1 343.8,67.9 344.3,65.8 344.9,67.0 345.4,65.4 346.0,70.2 346.5,64.6 347.1,69.0 347.6,64.0 348.2,69.8 348.7,64.0 349.3,68.6 349.8,65.0 350.4,68.2 350.9,66.7 351.5,68.5 352.0,63.9 352.6,68.8 353.1,66.8 353.7,70.2 354.2,68.1 354.8,74.4 355.3,67.0 355.9,80.0 356.4,74.3 357.0,79.7 357.5,77.9 358.1,85.6 358.6,74.8 359.2,84.8 359.7,82.7 360.3,86.1 360.8,85.7 361.4,89.4 361.9,88.8 362.5,92.8 363.0,90.6 363.6,95.6 364.1,93.1 364.7,98.6 365.2,96.7 365.8,100.5 366.3,97.5 366.9,102.5 367.4,99.5 368.0,106.3 368.5,105.0 369.1,108.0 369.6,107.9 370.2,111.3 370.7,108.0 371.3,113.6 371.8,111.0 372.4,117.3 372.9,114.4 373.5,119.7 374.0,116.6 374.6,124.5 375.1,118.8 375.7,127.1 376.2,122.4 376.8,128.6 377.3,124.0 377.9,134.5 378.4,127.1 379.0,135.5 379.5,132.2 380.1,136.9 380.6,134.9 381.2,137.8 381.7,137.0 382.3,141.1 382.8,137.4 383.4,146.1 383.9,143.3 384.5,148.8 385.0,145.1 385.6,151.8 386.1,148.9 386.7,152.7 387.2,147.5 387.8,156.2 388.3,154.5 388.9,159.7 389.4,155.2 390.0,161.3 390.5,155.0 391.1,162.7 391.6,162.4 392.2,171.6 392.7,163.2 393.3,169.4 393.8,162.2 394.4,173.2 394.9,166.8 395.5,176.6 396.0,169.3 396.6,175.8 397.1,170.1 397.7,182.1 398.2,173.4 398.8,182.6 399.3,171.1 399.9,178.6 400.4,172.1 401.0,181.9 401.5,174.6 402.1,181.2 402.6,176.6 403.2,187.4 403.7,171.5 404.3,180.2 404.8,173.7 405.4,179.2 405.9,171.4 406.5,181.3 407.0,174.0 407.6,181.3 408.1,169.2 408.7,183.4 409.2,177.7 409.8,186.5 410.3,175.6 410.9,185.9 411.4,170.2 412.0,179.4 412.5,175.2 413.1,179.4 413.6,173.2 414.2,183.5 414.7,173.4 415.3,184.1 415.8,176.7 416.4,182.2 416.9,174.7 417.5,180.7 418.0,172.4 418.6,182.7 419.1,171.7 419.7,188.6 420.2,172.8 420.8,180.0 421.3,172.3 421.9,182.5 422.4,171.1 423.0,181.2 423.5,173.0 424.1,187.9 424.6,171.8 425.2,182.3 425.7,175.9 426.3,181.7 426.8,172.2 427.4,188.9 427.9,175.7 428.5,182.1 429.0,173.5 429.6,187.8 430.1,177.0 430.7,183.1 431.2,171.9 431.8,185.1 432.3,174.4 432.9,183.4 433.4,173.5 434.0,181.4 434.5,175.0 435.1,179.8 435.6,174.6 436.2,180.9 436.7,172.8 437.3,188.0 437.8,167.6 438.4,186.3 438.9,175.4 439.5,180.7 440.0,172.6 440.6,179.3 441.1,177.2 441.7,187.4 442.2,175.9 442.8,182.9 443.3,173.5 443.9,180.5 444.4,175.9 445.0,180.5 445.5,171.1 446.1,183.2 446.6,176.8 447.2,187.5 447.7,175.5 448.3,187.6 448.8,172.6 449.4,181.5 449.9,177.2 450.5,181.5 451.0,175.7 451.6,185.0 452.1,177.3 452.7,182.8 453.2,175.4 453.8,182.1 454.3,173.8 454.9,179.6 455.4,177.5 456.0,180.1 456.5,176.4 457.1,185.0 457.6,175.6 458.2,183.0 458.7,175.4 459.3,180.1 459.8,177.0 460.4,180.7 460.9,176.9 461.5,181.0 462.0,171.1 462.6,185.6 463.1,169.0 463.7,179.4 464.2,176.8 464.8,185.5 465.3,171.2 465.9,180.7 466.4,176.1 467.0,183.8 467.5,175.1 468.1,186.2 468.6,172.8 469.2,188.1 469.7,176.6 470.3,185.7 470.8,177.9 471.4,181.8 471.9,173.1 472.5,179.4 473.0,167.5 473.6,182.1 474.1,174.0 474.7,186.7 475.2,174.7 475.8,180.0 476.3,176.8 476.9,182.6 477.4,176.4 478.0,181.5 478.5,172.0 479.1,179.1 479.6,171.9 480.2,184.1 480.7,177.3 481.3,183.2 481.8,175.8 482.4,179.8 482.9,175.8 483.5,185.0 484.0,173.9 484.6,179.3 485.1,176.0 485.7,183.4 486.2,177.8 486.8,185.1 487.3,168.5 487.9,181.9 488.4,176.2 489.0,181.7 489.5,176.8 490.1,186.0 490.6,172.8 491.2,180.5 491.7,174.1 492.3,183.5 492.8,175.9 493.4,183.1 493.9,174.3 494.5,189.2 495.0,166.0 495.6,179.7 496.1,174.8 496.7,184.2 497.2,176.6 497.8,182.1 498.3,176.0 498.9,183.4 499.4,171.9 500.0,181.3 500.5,175.7 501.1,179.1 501.6,177.8 502.2,180.0 502.7,171.7 503.3,180.6 503.8,174.0 504.4,179.2 504.9,177.5 505.5,181.3 506.0,170.4 506.6,179.4 507.1,177.3 507.7,180.0 508.2,169.1 508.8,183.3 509.3,175.9 509.9,183.4 510.4,176.8 511.0,180.0 511.5,171.7 512.1,187.2 512.6,171.6 513.2,180.9 513.7,175.3 514.3,180.0 514.8,176.1 515.4,185.0 515.9,174.7 516.5,183.4 517.0,168.4 517.6,182.0 518.1,175.9 518.7,184.0 519.2,173.4 519.8,180.7 520.3,176.7 520.9,182.5 521.4,171.7 522.0,179.6 522.5,176.5 523.1,180.9 523.6,174.2 524.2,190.7 524.7,172.0 525.3,184.7 525.8,174.9 526.4,181.8 526.9,176.2 527.5,179.5 528.0,174.4 528.6,183.1 529.1,172.5 529.7,179.2 530.2,177.5 530.8,184.0 531.3,175.5 531.9,181.8 532.4,173.9 533.0,180.8 533.5,165.7 534.1,179.9 534.6,173.0 535.2,180.5 535.7,177.1 536.3,181.6 536.8,173.4 537.4,180.3 537.9,170.4 538.5,180.5 539.0,168.6 539.6,182.0 540.1,177.9 540.7,183.0 541.2,171.6 541.8,185.4 542.3,177.1 542.9,193.0 543.4,177.2 544.0,180.5 544.5,170.6 545.1,185.2 545.6,174.4 546.2,179.3 546.7,177.2 547.3,180.9 547.8,176.9 548.4,179.5 548.9,173.4 549.5,182.5 550.0,177.0 550.6,184.3 551.1,173.3 551.7,180.8 552.2,171.5 552.8,179.7 553.3,175.1 553.9,183.1 554.4,168.7 555.0,189.6 555.5,169.0 556.1,181.4 556.6,177.5 557.2,181.4 557.7,173.4 558.3,181.6 558.8,175.4 559.4,180.8 559.9,168.0 560.5,181.7 561.0,169.3 561.6,182.4 562.1,176.0 562.7,183.6 563.2,177.3 563.8,183.6 564.3,174.4 564.9,184.7 565.4,167.1 566.0,183.5 566.5,177.3 567.1,193.0 567.6,176.2 568.2,182.4 568.7,176.8 569.3,181.4 569.8,167.4 570.4,181.8 570.9,177.5 571.5,181.8 572.0,172.9 572.6,186.3 573.1,172.2 573.7,188.6 574.2,174.6 574.8,183.7 575.3,175.7 575.9,185.5 576.4,177.7 577.0,179.3 577.5,173.4 578.1,186.0 578.6,174.3 579.2,179.3 579.7,174.5 580.3,182.5 580.8,177.7 581.4,183.6 581.9,176.1 582.5,182.3 583.0,176.9 583.6,180.1 584.1,177.4 584.7,184.7 585.2,176.6 585.8,181.4 586.3,173.2 586.9,183.5 587.4,176.9 588.0,179.1 588.5,176.0 589.1,183.1 589.6,176.2 590.2,181.5 590.7,176.0 591.3,179.5 591.8,177.2 592.4,180.6 592.9,177.2 593.5,179.6 594.0,171.8 594.6,186.5 595.1,176.9 595.7,184.1 596.2,172.2 596.8,181.9 597.3,175.2 597.9,180.2 598.4,177.0 599.0,183.3 599.5,168.5 600.1,184.2 600.6,173.3 601.2,184.2 601.7,174.7 602.2,180.2 602.8,170.3 603.3,181.5 603.9,177.0 604.4,182.6 605.0,173.1 605.5,184.5 606.1,174.0 606.6,186.9 607.2,177.3 607.7,179.4 608.3,171.5 608.8,184.8 609.4,175.1 609.9,182.8 610.5,174.0 611.0,182.3 611.6,174.0 612.1,184.2 612.7,176.7 613.2,181.2 613.8,167.4 614.3,180.3 614.9,176.9 615.4,184.8 616.0,172.6 616.5,186.1 617.1,177.0 617.6,185.5 618.2,176.2 618.7,183.7 619.3,177.4 619.8,180.0 620.4,169.3 620.9,179.8 621.5,175.4 622.0,183.2 622.6,173.9 623.1,183.6 623.7,176.9 624.2,186.5 624.8,176.9 625.3,186.8 625.9,172.6 626.4,183.6 627.0,176.0 627.5,183.3 628.1,175.7 628.6,186.2 629.2,176.8 629.7,183.3 630.3,177.1 630.8,182.5 631.4,174.3 631.9,184.6 632.5,170.1 633.0,180.3 633.6,172.3 634.1,183.0 634.7,176.4 635.2,183.0 635.8,174.1 636.3,187.1 636.9,172.1 637.4,181.9 638.0,173.4 638.5,181.7 639.1,177.3 639.6,179.7 640.2,169.6 640.7,180.4 641.3,173.8 641.8,183.0 642.4,172.6 642.9,185.9 643.5,174.6 644.0,180.5 644.6,174.8 645.1,181.0 645.7,166.8 646.2,180.8 646.8,177.2 647.3,180.5 647.9,177.1 648.4,187.4 649.0,169.7 649.5,179.2 650.1,171.5 650.6,185.3 651.2,171.5 651.7,179.2 652.3,168.5 652.8,183.3 653.4,169.8 653.9,181.8 654.5,166.8 655.0,187.2 655.6,176.1 656.1,182.4 656.7,171.9 657.2,185.5 657.8,173.3 658.3,180.8 658.9,175.7 659.4,185.8 660.0,175.6 660.5,184.7 661.1,176.2 661.6,182.8 662.2,174.7 662.7,185.6 663.3,168.6 663.8,180.6 664.4,175.7 664.9,186.8 665.5,166.2 666.0,182.1 666.6,174.0 667.1,184.0 667.7,177.9 668.2,188.0 668.8,170.2 669.3,180.0 669.9,166.8 670.4,182.6 671.0,170.9 671.5,183.6 672.1,169.5 672.6,183.9 673.2,172.0 673.7,183.2 674.3,168.4 674.8,186.3 675.4,177.8 675.9,179.4 676.5,166.5 677.0,181.5 677.6,170.7 678.1,179.6 678.7,174.1 679.2,182.7 679.8,173.9 680.3,179.7 680.9,168.8 681.4,180.7 682.0,176.6 682.5,181.9 683.1,168.8 683.6,182.0 684.2,174.4 684.7,180.2 685.3,172.0 685.8,179.2 686.4,172.9 686.9,181.6 687.5,169.4 688.0,185.9 688.6,177.8 689.1,179.3 689.7,177.1 690.2,186.6 690.8,175.0 691.3,186.3 691.9,171.3 692.4,182.8 693.0,171.0 693.5,184.0 694.1,168.7 694.6,183.3 695.2,176.5 695.7,180.5 696.3,177.8 696.8,185.3 697.4,172.2 697.9,181.2 698.5,177.6 699.0,180.8 699.6,177.6 700.1,187.5 700.7,177.3 701.2,179.3 701.8,173.2 702.3,191.3 702.9,175.3 703.4,181.4 704.0,176.2 704.5,183.7 705.1,167.4 705.6,180.6 706.2,176.9 706.7,185.3 707.3,167.4 707.8,183.2 708.4,173.1 708.9,185.9 709.5,173.8 710.0,182.2 710.6,177.4 711.1,181.5 711.7,177.3 712.2,186.8 712.8,171.3 713.3,186.4 713.9,176.7 714.4,180.8 715.0,173.0 715.5,185.3 716.1,175.8 716.6,183.7 717.2,167.6 717.7,187.7 718.3,173.2 718.8,184.6 719.4,175.1 719.9,186.1 720.5,174.5 721.0,182.4 721.6,177.4 722.1,184.7 722.7,176.1 723.2,186.0 723.8,175.9 724.3,182.9 724.9,175.8 725.4,185.1 726.0,172.9 726.5,184.1 727.1,174.4 727.6,183.4 728.2,171.4 728.7,182.3 729.3,177.3 729.8,182.1 730.4,175.9 730.9,180.7 731.5,174.9 732.0,185.2 732.6,173.9 733.1,189.1 733.7,174.6 734.2,181.3 734.8,165.6 735.3,187.3 735.9,173.3 736.4,180.5 737.0,173.0 737.5,187.8 738.1,175.6 738.6,180.4 739.2,172.1 739.7,185.4 740.3,176.6 740.8,181.7 741.4,167.7 741.9,181.0 742.5,175.7 743.0,183.7 743.6,171.7 744.1,182.1 744.7,177.7 745.2,182.0 745.8,173.1 746.3,180.1 746.9,175.5 747.4,191.5 748.0,170.6 748.5,187.0 749.1,176.7 749.6,187.1 750.2,176.9 750.7,180.7 751.3,176.0 751.8,183.0 752.4,174.8 752.9,189.9 753.5,171.7 754.0,181.8 754.6,177.3 755.1,182.1 755.7,171.3 756.2,179.3 756.8,177.9 757.3,180.0 757.9,174.0 758.4,185.0 759.0,174.5 759.5,180.5 760.1,170.9 760.6,179.5 761.2,176.3 761.7,186.2 762.3,174.0 762.8,187.8 763.4,172.7 763.9,179.2 764.5,175.6 765.0,185.0 765.6,176.6 766.1,184.2 766.7,173.3 767.2,187.4 767.8,177.5 768.3,179.1 768.9,175.2 769.4,180.1 770.0,177.4 770.5,182.4 771.1,165.2 771.6,183.1 772.2,174.0 772.7,181.1 773.3,176.3 773.8,180.4 774.4,167.1 774.9,182.1 775.5,169.1" fill="none" stroke="#dcdcdc" stroke-opacity="0.42" stroke-width="0.55" stroke-linejoin="round"/>
 <polyline points="0.2,176.3 1.1,181.0 2.1,172.9 3.0,181.2 4.0,177.3 5.0,181.9 5.9,175.7 6.9,181.6 7.8,174.8 8.8,181.1 9.7,173.5 10.6,181.5 11.6,177.3 12.5,181.1 13.5,174.2 14.4,180.5 15.4,175.9 16.3,185.2 17.3,176.2 18.2,181.0 19.2,172.9 20.1,180.0 21.1,177.2 22.0,180.0 23.0,174.7 23.9,183.4 24.9,173.0 25.8,180.2 26.8,177.2 27.7,184.5 28.7,177.0 29.6,184.2 30.6,172.9 31.5,183.1 32.5,173.1 33.4,185.2 34.4,171.3 35.3,181.7 36.3,175.1 37.2,182.5 38.2,175.4 39.2,181.0 40.1,176.7 41.1,184.8 42.0,176.2 43.0,180.5 43.9,177.3 44.9,180.6 45.8,175.5 46.8,180.3 47.7,175.1 48.7,185.7 49.6,169.3 50.6,184.2 51.5,172.6 52.5,183.0 53.4,167.8 54.4,180.3 55.3,177.0 56.3,184.0 57.2,167.8 58.2,180.2 59.1,165.1 60.1,180.1 61.0,175.5 62.0,181.4 62.9,176.1 63.9,181.8 64.8,173.1 65.8,179.5 66.7,176.0 67.7,189.6 68.6,175.7 69.6,183.2 70.5,174.2 71.5,184.5 72.4,173.7 73.4,180.1 74.3,173.6 75.3,185.9 76.2,172.0 77.2,179.5 78.1,177.3 79.1,183.9 80.0,171.7 81.0,181.9 81.9,175.6 82.9,181.8 83.8,170.1 84.8,186.5 85.7,176.2 86.7,181.3 87.6,172.3 88.6,180.2 89.5,176.5 90.5,180.4 91.4,177.3 92.4,181.9 93.3,173.7 94.3,181.7 95.2,170.5 96.2,184.0 97.1,173.3 98.1,186.2 99.0,174.4 100.0,180.3 100.9,173.7 101.9,181.0 102.8,169.1 103.8,182.3 104.7,176.9 105.7,180.0 106.6,176.7 107.6,182.7 108.5,169.6 109.5,181.2 110.4,173.2 111.4,181.9 112.3,173.3 113.3,185.4 114.2,174.8 115.2,183.4 116.1,175.3 117.1,181.5 118.0,174.6 119.0,184.0 119.9,174.8 120.9,187.6 121.8,175.0 122.8,180.1 123.7,169.9 124.7,183.4 125.6,175.2 126.6,180.6 127.5,176.4 128.5,182.4 129.4,177.2 130.4,183.3 131.3,171.6 132.3,180.4 133.2,171.6 134.2,182.4 135.1,174.3 136.1,182.7 137.0,174.1 138.0,185.8 138.9,173.0 139.9,179.8 140.8,174.8 141.8,185.2 142.7,176.0 143.7,181.5 144.6,170.7 145.6,181.3 146.5,177.0 147.5,183.7 148.4,174.9 149.3,180.2 150.3,168.9 151.2,185.0 152.2,175.1 153.1,181.2 154.1,177.2 155.0,183.3 156.0,174.0 156.9,185.3 157.9,175.5 158.8,181.5 159.8,176.8 160.7,182.6 161.7,175.4 162.6,180.0 163.6,174.0 164.5,181.8 165.5,172.8 166.4,182.0 167.4,172.6 168.3,181.4 169.3,173.7 170.2,184.4 171.2,175.2 172.1,180.5 173.1,176.8 174.0,179.6 175.0,176.4 175.9,181.6 176.9,170.5 177.8,187.0 178.8,176.7 179.7,187.1 180.7,173.9 181.6,183.9 182.6,174.6 183.5,189.5 184.5,175.2 185.4,185.9 186.4,176.5 187.3,182.4 188.3,175.1 189.2,184.4 190.2,172.7 191.1,186.1 192.1,175.2 193.0,180.9 194.0,172.6 194.9,180.0 195.9,177.0 196.8,182.7 197.8,177.1 198.7,179.7 199.7,174.6 200.6,185.0 201.6,174.6 202.5,179.6 203.5,176.9 204.4,185.8 205.4,176.7 206.3,179.6 207.3,170.5 208.2,185.6 209.2,175.3 210.1,179.9 211.1,175.0 212.0,183.7 213.0,175.7 213.9,183.3 214.9,174.4 215.8,179.9 216.8,175.9 217.7,180.1 218.7,176.6 219.6,181.0 220.6,173.1 221.5,183.8 222.5,176.9 223.4,186.6 224.4,177.0 225.3,183.1 226.3,174.9 227.2,179.6 228.2,172.9 229.1,181.7 230.1,175.3 231.0,180.2 232.0,176.1 232.9,183.2 233.9,176.9 234.8,182.3 235.8,175.4 236.7,186.4 237.7,173.1 238.6,182.5 239.6,175.2 240.5,185.4 241.5,175.1 242.4,186.2 243.4,177.3 244.3,181.3 245.3,174.8 246.2,183.9 247.2,175.8 248.1,181.5 249.1,175.8 250.0,180.4 251.0,175.5 251.9,181.7 252.9,177.3 253.8,183.7 254.8,171.2 255.7,180.8 256.7,171.2 257.6,180.7 258.6,176.9 259.5,182.8 260.5,173.6 261.4,184.2 262.4,171.0 263.3,185.2 264.3,176.5 265.2,182.8 266.2,175.9 267.1,182.1 268.1,175.9 269.0,181.8 270.0,176.4 270.9,186.7 271.9,175.1 272.8,188.9 273.8,175.8 274.7,181.7 275.7,173.2 276.6,182.8 277.6,168.8 278.5,176.4 279.5,169.9 280.4,171.8 281.4,164.8 282.3,166.5 283.3,159.3 284.2,163.8 285.2,157.4 286.1,157.7 287.1,152.3 288.0,154.4 289.0,147.4 289.9,148.2 290.9,144.2 291.8,145.8 292.8,139.9 293.7,139.5 294.7,133.3 295.6,134.7 296.6,128.9 297.5,129.2 298.5,125.1 299.4,125.6 300.4,120.1 301.3,121.8 302.3,115.5 303.2,118.5 304.2,110.0 305.1,111.8 306.1,102.3 307.0,107.6 308.0,101.4 308.9,101.3 309.9,94.5 310.8,96.8 311.8,92.6 312.7,91.8 313.7,83.2 314.6,87.0 315.6,81.6 316.5,83.5 317.5,77.2 318.4,78.3 319.4,70.5 320.3,73.8 321.3,68.8 322.2,71.9 323.2,66.1 324.1,69.3 325.1,62.2 326.0,70.5 327.0,64.6 327.9,67.5 328.9,65.8 329.8,67.9 330.8,65.3 331.7,67.4 332.7,64.8 333.6,69.6 334.6,66.1 335.5,69.2 336.5,66.0 337.4,72.5 338.4,66.8 339.3,69.5 340.3,66.1 341.2,68.8 342.2,65.4 343.1,67.2 344.1,65.8 345.0,70.3 346.0,62.2 346.9,69.7 347.9,60.6 348.8,68.0 349.8,65.1 350.7,68.8 351.7,63.9 352.6,69.4 353.6,68.4 354.5,72.7 355.5,71.2 356.4,81.4 357.4,74.7 358.3,83.5 359.3,81.7 360.2,87.1 361.2,87.2 362.1,92.9 363.1,90.7 364.0,95.2 365.0,95.5 365.9,101.4 366.9,99.8 367.8,107.8 368.8,105.4 369.7,110.5 370.7,107.3 371.6,116.1 372.6,113.8 373.5,121.0 374.5,116.6 375.4,123.8 376.4,121.4 377.3,131.2 378.3,128.0 379.2,133.6 380.2,132.2 381.1,141.0 382.1,139.1 383.0,144.5 384.0,142.6 384.9,148.6 385.9,148.0 386.8,152.6 387.8,152.7 388.7,161.3 389.7,155.5 390.6,162.9 391.6,159.9 392.5,168.1 393.5,166.1 394.4,179.5 395.4,166.3 396.3,185.6 397.3,172.6 398.2,183.3 399.2,174.4 400.1,181.0 401.1,174.5 402.0,182.2 403.0,176.0 403.9,181.1 404.9,173.8 405.8,180.3 406.8,175.9 407.7,182.8 408.7,173.2 409.6,185.9 410.6,175.9 411.5,181.0 412.5,171.4 413.4,182.0 414.4,174.9 415.3,184.7 416.3,169.8 417.2,181.9 418.2,173.3 419.1,180.8 420.1,173.8 421.0,185.4 422.0,175.9 422.9,187.4 423.9,176.7 424.8,183.1 425.8,177.5 426.7,181.3 427.7,177.1 428.6,180.3 429.6,176.7 430.5,182.2 431.5,176.1 432.4,180.1 433.4,177.4 434.3,182.2 435.3,173.6 436.2,180.5 437.2,174.3 438.1,188.9 439.1,175.4 440.0,184.8 441.0,173.9 441.9,182.3 442.9,172.2 443.8,183.3 444.8,174.4 445.7,187.0 446.7,175.8 447.6,180.3 448.6,171.1 449.5,183.4 450.5,172.9 451.4,180.0 452.4,170.4 453.3,183.6 454.3,176.1 455.2,181.9 456.2,175.0 457.1,182.4 458.1,171.5 459.0,181.1 460.0,171.2 460.9,185.8 461.9,172.3 462.8,180.7 463.8,171.7 464.7,182.1 465.7,175.9 466.6,180.3 467.6,170.2 468.5,180.6 469.5,176.6 470.4,183.1 471.4,176.4 472.3,186.0 473.3,176.6 474.2,182.2 475.2,168.2 476.1,187.9 477.1,173.9 478.0,181.1 479.0,175.2 479.9,188.4 480.9,176.5 481.8,182.7 482.8,174.4 483.7,185.2 484.7,175.6 485.6,184.1 486.6,171.6 487.5,179.5 488.5,171.3 489.4,187.4 490.4,172.4 491.3,179.5 492.3,176.8 493.2,181.9 494.2,173.2 495.1,182.2 496.1,177.0 497.0,187.5 498.0,171.6 498.9,186.4 499.9,177.3 500.8,180.3 501.8,168.9 502.7,179.6 503.7,169.4 504.6,185.3 505.6,168.2 506.5,180.1 507.5,175.4 508.4,180.3 509.4,172.6 510.3,184.8 511.3,172.7 512.2,182.0 513.2,177.3 514.1,182.7 515.1,173.3 516.0,181.8 517.0,175.8 517.9,179.8 518.9,173.9 519.8,179.6 520.8,176.1 521.7,186.0 522.7,177.3 523.6,182.6 524.6,175.0 525.5,179.8 526.5,170.6 527.4,184.7 528.4,175.9 529.3,184.6 530.3,176.3 531.2,186.0 532.2,176.0 533.1,185.6 534.1,176.4 535.0,187.1 536.0,176.3 536.9,180.1 537.9,173.4 538.8,181.0 539.8,176.2 540.7,180.3 541.7,175.8 542.6,185.3 543.6,174.7 544.5,183.0 545.5,168.6 546.4,190.1 547.4,174.0 548.3,185.4 549.3,177.4 550.2,182.2 551.2,175.3 552.1,183.0 553.1,175.0 554.0,181.8 555.0,176.0 555.9,181.9 556.9,175.2 557.8,180.8 558.8,175.6 559.7,183.8 560.7,175.6 561.6,183.7 562.6,167.5 563.5,183.5 564.5,167.9 565.4,180.3 566.4,174.9 567.3,180.0 568.3,175.6 569.2,180.7 570.2,176.7 571.1,180.9 572.1,174.4 573.0,189.5 574.0,174.4 574.9,181.6 575.9,174.2 576.8,181.2 577.8,176.0 578.7,183.2 579.7,172.9 580.6,186.0 581.6,177.1 582.5,179.7 583.5,173.7 584.4,184.7 585.4,174.1 586.3,184.0 587.3,173.9 588.2,181.4 589.2,174.4 590.1,180.9 591.1,171.9 592.0,181.5 593.0,176.6 593.9,189.2 594.9,175.2 595.8,182.5 596.8,173.3 597.7,185.2 598.7,172.4 599.6,182.7 600.6,172.3 601.6,187.6 602.5,173.6 603.5,180.7 604.4,176.7 605.4,181.3 606.3,171.8 607.3,183.8 608.2,174.0 609.2,180.1 610.1,172.9 611.1,180.1 612.0,171.9 613.0,185.9 613.9,174.6 614.9,183.5 615.8,172.3 616.8,182.0 617.7,173.9 618.7,180.0 619.6,173.3 620.6,183.1 621.5,176.8 622.5,182.5 623.4,174.8 624.4,182.4 625.3,171.7 626.3,186.2 627.2,174.4 628.2,180.3 629.1,173.8 630.1,186.0 631.0,174.2 632.0,184.7 632.9,174.9 633.9,179.9 634.8,170.8 635.8,182.1 636.7,175.8 637.7,181.8 638.6,174.6 639.6,180.6 640.5,176.8 641.5,185.8 642.4,169.3 643.4,184.7 644.3,168.9 645.3,182.3 646.2,169.8 647.2,184.4 648.1,175.1 649.1,180.6 650.0,177.4 651.0,187.4 651.9,176.2 652.9,180.7 653.8,172.8 654.8,184.3 655.7,168.5 656.7,185.8 657.6,176.2 658.6,179.8 659.5,176.9 660.5,180.1 661.4,176.0 662.4,184.9 663.3,175.7 664.3,181.0 665.2,175.2 666.2,184.5 667.1,172.6 668.1,188.8 669.0,170.4 670.0,188.0 670.9,173.8 671.9,181.1 672.8,177.4 673.8,182.4 674.7,164.7 675.7,181.6 676.6,176.8 677.6,181.9 678.5,176.5 679.5,181.6 680.4,173.6 681.4,184.8 682.3,172.9 683.3,181.3 684.2,177.1 685.2,180.4 686.1,170.9 687.1,182.1 688.0,173.6 689.0,181.5 689.9,173.5 690.9,183.2 691.8,175.4 692.8,182.9 693.7,170.1 694.7,182.3 695.6,173.1 696.6,182.1 697.5,175.9 698.5,181.4 699.4,172.9 700.4,183.6 701.3,170.3 702.3,179.7 703.2,176.4 704.2,184.2 705.1,170.3 706.1,179.8 707.0,172.4 708.0,182.6 708.9,171.7 709.9,182.2 710.8,169.0 711.8,185.0 712.7,168.7 713.7,182.0 714.6,174.9 715.6,181.8 716.5,175.2 717.5,181.7 718.4,171.7 719.4,183.5 720.3,175.7 721.3,186.7 722.2,171.4 723.2,179.9 724.1,174.7 725.1,185.6 726.0,177.1 727.0,185.0 727.9,173.2 728.9,186.1 729.8,174.3 730.8,179.7 731.7,176.0 732.7,180.3 733.6,171.4 734.6,182.4 735.5,173.5 736.5,185.0 737.4,169.7 738.4,183.4 739.3,173.9 740.3,181.7 741.2,175.9 742.2,180.2 743.1,177.2 744.1,181.3 745.0,177.2 746.0,181.4 746.9,174.5 747.9,182.6 748.8,177.0 749.8,182.5 750.7,176.8 751.7,185.2 752.6,173.7 753.6,182.2 754.5,177.0 755.5,182.2 756.4,175.7 757.4,182.2 758.3,171.3 759.3,186.0 760.2,164.3 761.2,184.4 762.1,172.8 763.1,181.8 764.0,175.1 765.0,185.8 765.9,169.8 766.9,181.7 767.8,169.5 768.8,185.2 769.7,175.5 770.7,179.8 771.6,177.5 772.6,181.7 773.5,176.9 774.5,180.7 775.4,172.5" fill="none" stroke="#e8e8e8" stroke-opacity="0.46" stroke-width="0.7" stroke-linejoin="round"/>
 <rect x="296.5" y="0.5" width="81" height="194" fill="#3a7a26" fill-opacity="0.26" stroke="#56942c" stroke-width="1"/>
 <line x1="336.9" y1="0" x2="336.9" y2="194" stroke="#c02018" stroke-opacity="0.7" stroke-width="0.9"/>
 <g font-family="Liberation Sans, sans-serif" font-size="7.2" fill="#c8c8c8" fill-opacity="0.9">
 <text x="81.8" y="189.5">433.21</text>
<text x="145.7" y="189.5">433.22</text>
<text x="209.5" y="189.5">433.23</text>
<text x="273.4" y="189.5">433.24</text>
<text x="337.2" y="189.5">433.25</text>
<text x="401.1" y="189.5">433.26</text>
<text x="465.0" y="189.5">433.27</text>
<text x="528.8" y="189.5">433.28</text>
<text x="592.7" y="189.5">433.29</text>
<text x="656.5" y="189.5">433.30</text>
<text x="720.4" y="189.5">433.31</text>
 </g>
 <g font-family="Liberation Sans, sans-serif" font-size="8.3" fill="#a4a4a4">
 <text x="20" y="25.6" text-anchor="end">-40</text>
<text x="20" y="36.9" text-anchor="end">-45</text>
<text x="20" y="48.2" text-anchor="end">-50</text>
<text x="20" y="59.5" text-anchor="end">-55</text>
<text x="20" y="70.8" text-anchor="end">-60</text>
<text x="20" y="82.1" text-anchor="end">-65</text>
<text x="20" y="93.4" text-anchor="end">-70</text>
<text x="20" y="104.7" text-anchor="end">-75</text>
<text x="20" y="116.0" text-anchor="end">-80</text>
<text x="20" y="127.3" text-anchor="end">-85</text>
<text x="20" y="138.6" text-anchor="end">-90</text>
<text x="20" y="149.9" text-anchor="end">-95</text>
<text x="20" y="161.2" text-anchor="end">-100</text>
<text x="20" y="172.5" text-anchor="end">-105</text>
 </g>
</svg>
</div>

<!-- waterfall -->
<div id="wf" class="abs">
 <svg class="abs" style="left:0;top:0" width="776" height="194"><filter id="nz" x="0" y="0" width="100%" height="100%" color-interpolation-filters="sRGB"><feTurbulence type="fractalNoise" baseFrequency="0.85" numOctaves="2" seed="5"/><feColorMatrix type="matrix" values="0 0 0 0 0.03  0 0 0 0 0.03  0 0 0 0 0.2  3.0 0 0 0 -1.42"/></filter><rect width="776" height="194" filter="url(#nz)"/></svg>
 <div class="band" style="top:0;height:46px"></div>
 <div class="band" style="top:54px;height:9px"></div>
 <div class="band" style="top:79.5px;height:99px"></div>
 <div class="gap" style="top:46px;height:8px"></div>
 <div class="gap" style="top:63px;height:16.5px"></div>
 <div class="gap" style="top:178.5px;height:5px"></div>
 <div class="abs" style="left:0;top:45px;width:776px;height:1px;background:#0a0c3a;opacity:.55"></div>
 <div class="abs" style="left:0;top:62.5px;width:776px;height:1px;background:#0a0c3a;opacity:.55"></div>
 <div class="abs" style="left:17.2px;top:0;width:1px;height:185.5px;background:#98a678"></div>
 <div class="abs" style="left:219.6px;top:186.5px;width:1px;height:7px;background:#9aa6a8"></div>
</div>

<!-- vertical slider -->
<div class="abs" style="left:781.5px;top:40px;width:3.4px;height:191px;border-radius:1.7px;background:linear-gradient(90deg,#17599a,#1e80d2 40%,#1e7ccc)"></div>
<div class="abs" style="left:781.5px;top:236px;width:3.4px;height:188.4px;border-radius:1.7px;background:linear-gradient(90deg,#484e53,#6e7276 45%,#6a6e72)"></div>
<div class="abs" style="left:778px;top:226.6px;width:11px;height:11px;border-radius:2.5px;background:linear-gradient(#f4f4f4,#d4d4d4);border:0.5px solid #9a9a9a"></div>

<!-- constellation overlay -->
<div class="abs" style="left:-1px;top:42px;width:170.5px;height:189px;border-radius:2px;background:rgba(34,34,34,0.62);border-right:1px solid rgba(160,160,160,.8);border-bottom:1px solid rgba(165,165,165,.85)"></div>
<div class="abs" style="left:0;top:42px;width:169.6px;height:17px;border-radius:1.5px 1.5px 0 0;background:#f1f2f3;color:#c4c9cd;font-size:7.95px;line-height:17px;text-align:center;padding-right:2px">Constellation display</div>
<svg class="abs" style="left:0;top:41px" width="171" height="191" viewBox="0 0 171 191">
 <rect x="1" y="3" width="11" height="11.5" fill="#222" stroke="#111" stroke-width="0.6"/>
 <rect x="2" y="4.3" width="1.2" height="1.2" fill="#1a9a1a"/><rect x="9.6" y="4.3" width="1.2" height="1.2" fill="#1a9a1a"/>
 <rect x="2" y="12" width="1.2" height="1.2" fill="#1a9a1a"/><rect x="9.6" y="12" width="1.2" height="1.2" fill="#1a9a1a"/>
 <path d="M2 10.6 H11" stroke="#3a4a5a" stroke-width="0.6"/>
 <path d="M144.9 7.6 L148.2 10.8 L151.5 7.6" stroke="#c9cdd1" stroke-width="1" fill="none"/>
 <circle cx="161.9" cy="8.8" r="5" fill="#c2c7cb"/>
 <path d="M159.8 6.7 L164 10.9 M164 6.7 L159.8 10.9" stroke="#f3f4f5" stroke-width="1" fill="none"/>
 <line x1="85.6" y1="17.5" x2="85.6" y2="189" stroke="#707070" stroke-width="0.8"/>
 <line x1="0" y1="103.3" x2="169" y2="103.3" stroke="#707070" stroke-width="0.8"/>
 <g stroke="#1ec81e" stroke-width="2.1" stroke-linecap="round">
  <line x1="53.4" y1="73.2" x2="56.2" y2="71.2"/>
  <line x1="114.4" y1="71.2" x2="116.8" y2="73.4"/>
  <line x1="53.8" y1="132" x2="56.6" y2="134"/>
  <line x1="114.4" y1="134" x2="116.8" y2="131.6"/>
 </g>
</svg>

<!-- control row -->
<div class="lbl2" style="left:0;top:428.5px;width:43.5px;height:18px;line-height:18px;font-size:7.1px">Sample rate</div>
<div class="combo" style="left:45px;top:429.5px;width:57.5px;height:16px;font-size:7.65px;line-height:14px;padding-left:4.6px">1000000<svg style="left:41.5px;top:3.6px" width="10" height="7" viewBox="0 0 10 7"><path d="M1.2 1.4 L5 5.2 L8.8 1.4" stroke="#fff" stroke-width="1.5" fill="none"/></svg></div>
<div class="lbl2" style="left:110px;top:428.5px;width:29px;height:18px;line-height:18px;font-size:6.9px"><span style="display:inline-block;transform:scaleX(.92)">FFT size</span></div>
<div class="combo" style="left:141px;top:429.5px;width:52px;height:16px;font-size:7.4px;line-height:14px;padding-left:4.6px">131072<svg style="left:36px;top:3.6px" width="10" height="7" viewBox="0 0 10 7"><path d="M1.2 1.4 L5 5.2 L8.8 1.4" stroke="#fff" stroke-width="1.5" fill="none"/></svg></div>
<div class="chk" style="left:201px;top:432.9px"></div>
<div class="abs" style="left:214px;top:432px;font-size:6.8px;line-height:11px;color:#e8e8cc">Peak hold</div>
<div class="lbl2" style="left:254.5px;top:428.5px;width:49.5px;height:18px;line-height:18px;font-size:6.85px">FFT Averaging</div>
<div class="abs" style="left:309px;top:434.6px;width:44px;height:2.6px;border-radius:1.3px;background:#6e777d;box-shadow:0 0 0 0.5px #7f888e"></div>
<div class="abs" style="left:306.1px;top:430.8px;width:11px;height:11px;border-radius:2.5px;background:linear-gradient(#f2f2f2,#cfcfcf);border:0.5px solid #9a9a9a"></div>
<div class="chk" style="left:361.7px;top:432.9px;border-color:#3a9ae8;background:#4a545c"><div class="abs" style="left:1.2px;top:1.2px;width:5.6px;height:5.6px;background:#3a9ef2;border-radius:1px"></div></div>
<div class="abs" style="left:374.9px;top:432.3px;font-size:6.9px;line-height:11px;color:#e8e464;transform:scaleX(.83);transform-origin:0 50%">FFT</div>
<div class="chk" style="left:396px;top:432.9px"></div>
<div class="abs" style="left:409px;top:432px;font-size:7.0px;line-height:11px;color:#e8e8cc">Peak detect</div>
<div class="lbl2" style="left:456.5px;top:428.5px;width:16.5px;height:18px;line-height:18px;font-size:6.9px"><span style="display:inline-block;transform:scaleX(.85)">FPS</span></div>
<div class="combo" style="left:475px;top:429.5px;width:28px;height:16px;font-size:6.7px;line-height:14px;padding-left:3.8px">15<svg style="left:15px;top:3.6px" width="10" height="7" viewBox="0 0 10 7"><path d="M1.2 1.4 L5 5.2 L8.8 1.4" stroke="#fff" stroke-width="1.5" fill="none"/></svg></div>
<div class="btn" style="left:511px;top:429px;width:41.5px;height:17px;font-size:6.85px;line-height:15px">AutoSq</div>
<div class="btn" style="left:562px;top:429px;width:36px;height:17px;font-size:7.8px;line-height:15px">Mem</div>
<div class="lbl2" style="left:606.5px;top:428.5px;width:22.5px;height:18px;line-height:18px;font-size:7.1px">Scan</div>
<div class="btn" style="left:632px;top:429.5px;width:17.5px;height:16px"></div>
<div class="btn" style="left:653.5px;top:429.5px;width:16.5px;height:16px"></div>
<svg class="abs" style="left:632px;top:429px" width="40" height="17" viewBox="0 0 40 17">
 <path d="M5.8 8.6 L9.4 5.4 L9.4 7 L12.4 7 L12.4 10.4 L9.4 10.4 L9.4 11.9 Z" fill="#14a01a"/>
 <path d="M5.8 8.6 L9.4 11.9 L9.4 10.4 L12.4 10.4 L12.4 9 Z" fill="#0c7a12"/>
 <path d="M33 8.6 L29.4 5.4 L29.4 7 L26.4 7 L26.4 10.4 L29.4 10.4 L29.4 11.9 Z" fill="#14a01a"/>
 <path d="M33 8.6 L29.4 11.9 L29.4 10.4 L26.4 10.4 L26.4 9 Z" fill="#0c7a12"/>
</svg>
<div class="lbl2" style="left:678.5px;top:428.5px;width:42.5px;height:18px;line-height:18px;font-size:7.7px">Last heard</div>
<div class="lbl2" style="left:723px;top:428.5px;width:52px;height:18px;line-height:18px;font-size:6.6px">Y08RZZ</div>

<!-- knob row frame -->
<div class="abs" style="left:-3px;top:457px;width:806px;height:47px;border:1px solid #76818a;border-radius:3px"></div>

<div class="lcd" style="left:31.6px;top:470.8px;width:28.5px;height:17px"></div>
<div class="lcd" style="left:103px;top:470.5px;width:28.2px;height:17px"></div>
<div class="lcd" style="left:173.6px;top:470px;width:28.1px;height:16.8px"></div>
<div class="lcd" style="left:246px;top:470.4px;width:29px;height:17px"></div>
<div class="lcd" style="left:321.6px;top:469px;width:40.4px;height:17px"></div>

<div class="lbl" style="left:16px;top:490px;width:34.7px;font-size:6.9px;line-height:11px">Squelch</div>
<div class="lbl" style="left:87.2px;top:491px;width:34.4px;font-size:7.85px;line-height:11px">Volume</div>
<div class="lbl" style="left:158.5px;top:490px;width:34px;font-size:6.7px;line-height:10.5px;height:10.5px">TX gain</div>
<div class="lbl" style="left:230px;top:491px;width:40px;font-size:7.25px;line-height:11px">RX gain</div>
<div class="lbl" style="left:305.7px;top:491px;width:34px;font-size:7.7px;line-height:11px">Clarifier</div>
<div class="lbl" style="left:363px;top:491px;width:39px;font-size:7.25px;line-height:11px">AGC attack</div>
<div class="lbl" style="left:405.3px;top:491px;width:39.3px;font-size:7.2px;line-height:11px;padding-left:1.7px">AGC decay</div>

<div class="lbl" style="left:452.3px;top:460.5px;width:39.7px;height:10px;font-size:7.1px;line-height:10px;padding-left:3px">RX Gains</div>
<div class="grp" style="left:445px;top:472px;width:172.5px;height:28.5px"></div>
<div class="lbl" style="left:630.5px;top:460.5px;width:39.5px;height:10px;font-size:7.1px;line-height:10px;padding-left:2.8px">TX Gains</div>
<div class="grp" style="left:622.3px;top:472px;width:172px;height:28.5px"></div>

<!-- bottom row -->
<div class="grp" style="left:-2px;top:507px;width:78.5px;height:35px;border-color:#7d878e"></div>
<div class="led" style="left:5.4px;top:518.6px;width:12px;height:12px;background:radial-gradient(circle at 50% 45%,#5cbcff 0,#2a8cf0 55%,#1a68c8 100%)"></div>
<div class="led" style="left:22.5px;top:518.6px;width:12px;height:12px;background:radial-gradient(circle at 50% 45%,#c4c4c4 0,#a4a4a4 60%,#8c8c8c 100%)"></div>
<div class="led" style="left:39.8px;top:518.6px;width:12px;height:12px;background:radial-gradient(circle at 50% 45%,#eeeeee 0,#d6d6d6 60%,#b8b8b8 100%)"></div>
<div class="led" style="left:57px;top:518.6px;width:12px;height:12px;background:radial-gradient(circle at 50% 45%,#ff4a3a 0,#f01414 55%,#c00c0c 100%)"></div>

<div class="abs" style="left:79.5px;top:509px;width:54.5px;height:32.5px;border-radius:2.5px;border:1px solid #8e0000;background:linear-gradient(#d20000,#c40000 45%,#a80000);color:#fff;font-size:14.6px;line-height:31px;padding-left:19.5px"><span style="display:inline-block;transform:scaleX(.845);transform-origin:0 50%">PTT</span></div>
<div class="led" style="left:88.9px;top:521.4px;width:7.2px;height:7.2px;background:radial-gradient(circle at 50% 45%,#ff3a30 0,#ee1414 60%,#a00 100%);box-shadow:0 0 0 0.6px #8a0000"></div>

<div class="abs" style="left:136.6px;top:507px;width:183px;height:35.5px;border-radius:2.5px;background-color:#2b2523;background-image:radial-gradient(circle,#3a3230 0.45px,rgba(0,0,0,0) 0.7px);background-size:1.75px 1.75px;box-shadow:0 0 0 0.6px #22201f"></div>
<div class="abs" style="left:299px;top:520.5px;font-size:6.4px;line-height:9px;color:#7d7d7d">MHz</div>

<!-- s-meter -->
<div class="abs" style="left:321px;top:505.5px;width:91px;height:37px;border-radius:2.5px;background:radial-gradient(ellipse 70px 16px at 50% -4px,#3a3a3a 0,#2a2a2a 60%,rgba(30,30,30,0) 100%),linear-gradient(#1c1c1c,#141414 40%,#101010);overflow:hidden;box-shadow:0 0 0 0.6px #2c2c2c"></div>

<!-- small buttons -->
<div class="btn" style="left:415px;top:506.3px;width:14.5px;height:36.7px;border-color:#6f7980;background:#4a535a"></div>
<div class="btn" style="left:433.8px;top:506.3px;width:24px;height:36.7px;border-color:#6f7980;background:#4a535a"></div>

<div class="edit" style="left:464.5px;top:507.5px;width:86px;height:14px;font-size:10.4px;line-height:12.5px">433250</div>
<div class="grp" style="left:460.6px;top:525.5px;width:93.6px;height:16px;border-color:#7d878e"></div>
<div class="abs" style="left:464px;top:528.5px;font-size:6.5px;line-height:10px;color:#e8e8cc">Split (kHz)</div>
<div class="edit" style="left:497px;top:527px;width:56.5px;height:13.5px;font-size:9.6px;line-height:12px;padding-right:16px">0</div>

<div class="btn" style="left:574.2px;top:507px;width:42.2px;height:15.6px;font-size:7.3px;line-height:14.8px;padding-left:11.2px;border-color:#737d84;background:#464e54;color:#f0f0ec">Rev</div>
<div class="btn" style="left:574.2px;top:526.3px;width:42.2px;height:16px;font-size:7.85px;line-height:14px;padding-left:11px;border-color:#737d84;background:#464e54;color:#f0f0ec">Duplex</div>
<div class="led" style="left:583.7px;top:510.7px;width:7.6px;height:7.6px;background:radial-gradient(circle at 50% 45%,#c8c8c8 0,#a0a0a0 55%,#5a5a5a 100%)"></div>
<div class="led" style="left:577.8px;top:530.1px;width:8.4px;height:8.4px;background:radial-gradient(circle at 50% 45%,#ffffff 0,#e8e8e8 60%,#c8c8c8 100%)"></div>

<div class="combo" style="left:620.5px;top:505.5px;width:42px;height:18.2px;font-size:6.6px;line-height:16.2px;padding-left:3.6px">CTCSS<svg style="left:29px;top:5px" width="10" height="7" viewBox="0 0 10 7"><path d="M1.6 1.6 L5 5 L8.4 1.6" stroke="#fff" stroke-width="1.4" fill="none"/></svg></div>
<div class="combo" style="left:620.5px;top:525px;width:42px;height:18px;font-size:6.6px;line-height:16.2px;padding-left:3.6px">CTCSS<svg style="left:29px;top:5px" width="10" height="7" viewBox="0 0 10 7"><path d="M1.6 1.6 L5 5 L8.4 1.6" stroke="#fff" stroke-width="1.4" fill="none"/></svg></div>
<div class="combo" style="left:664.3px;top:505.5px;width:83.8px;height:18.2px;font-size:7.25px;line-height:16.2px;padding-left:3.8px">M17<svg style="left:70.6px;top:5px" width="10" height="7" viewBox="0 0 10 7"><path d="M1.6 1.6 L5 5 L8.4 1.6" stroke="#fff" stroke-width="1.4" fill="none"/></svg></div>
<div class="combo" style="left:664.3px;top:525px;width:83.8px;height:18px;font-size:7.25px;line-height:16.2px;padding-left:3.8px">M17<svg style="left:70.6px;top:5px" width="10" height="7" viewBox="0 0 10 7"><path d="M1.6 1.6 L5 5 L8.4 1.6" stroke="#fff" stroke-width="1.4" fill="none"/></svg></div>

<div class="btn" style="left:751.5px;top:506.6px;width:52px;height:15.8px;border-color:#727c83;background:#4b5358"></div>
<div class="btn" style="left:751.5px;top:526.6px;width:52px;height:15px;border-color:#727c83;background:#4b5358"></div>
<div class="led" style="left:762.7px;top:510.6px;width:8.2px;height:8.2px;background:radial-gradient(circle at 50% 45%,#30ff30 0,#18e818 60%,#10b010 100%)"></div>
<div class="led" style="left:763px;top:529.8px;width:8.4px;height:8.4px;background:radial-gradient(circle at 50% 45%,#ff3030 0,#f01414 60%,#b00c0c 100%)"></div>
<div class="abs" style="left:772.6px;top:507.6px;font-size:10.6px;line-height:14px;color:#1ca01c">RX</div>
<div class="abs" style="left:773px;top:527px;font-size:10.6px;line-height:14px;color:#e01212">TX</div>

<!-- overlay svg: knobs, lcd digits, meters, icons -->
<svg class="abs" style="left:0;top:0;pointer-events:none" width="800" height="545" viewBox="0 0 800 545">
 <defs>
  <linearGradient id="kg" x1="0" y1="0" x2="0" y2="1">
   <stop offset="0" stop-color="#3c9cd0"/><stop offset="0.5" stop-color="#2278a8"/><stop offset="1" stop-color="#134868"/>
  </linearGradient>
  <linearGradient id="kr" x1="0" y1="0" x2="0" y2="1">
   <stop offset="0" stop-color="#642028"/><stop offset="0.5" stop-color="#4c181e"/><stop offset="1" stop-color="#241012"/>
  </linearGradient>
 </defs>
 <line x1="8.8" y1="469.1" x2="8.1" y2="466.2" stroke="#2a3cd0" stroke-opacity="0.90" stroke-width="1.15"/>
<line x1="4.8" y1="471.2" x2="2.8" y2="468.9" stroke="#2a40cc" stroke-opacity="0.90" stroke-width="1.15"/>
<line x1="2.2" y1="474.9" x2="-0.6" y2="473.8" stroke="#2c58c8" stroke-opacity="0.85" stroke-width="1.15"/>
<line x1="1.7" y1="479.4" x2="-1.3" y2="479.7" stroke="#3a96cc" stroke-opacity="0.80" stroke-width="1.15"/>
<line x1="3.2" y1="483.6" x2="0.7" y2="485.3" stroke="#3c9cc8" stroke-opacity="0.60" stroke-width="1.15"/>
<line x1="11.1" y1="468.0" x2="11.1" y2="466.6" stroke="#4a74b0" stroke-opacity="0.35" stroke-width="0.92"/>
<line x1="6.3" y1="469.2" x2="5.7" y2="467.9" stroke="#4a74b0" stroke-opacity="0.35" stroke-width="0.92"/>
<line x1="2.6" y1="472.4" x2="1.5" y2="471.6" stroke="#4a74b0" stroke-opacity="0.35" stroke-width="0.92"/>
<line x1="0.9" y1="477.0" x2="-0.5" y2="476.8" stroke="#4a74b0" stroke-opacity="0.35" stroke-width="0.92"/>
<line x1="1.4" y1="481.8" x2="0.1" y2="482.3" stroke="#4a74b0" stroke-opacity="0.35" stroke-width="0.92"/>
<rect x="-2.4" y="487.4" width="2.4" height="1.4" rx="0.5" fill="#e4646a"/>
<line x1="13.4" y1="469.1" x2="14.1" y2="466.2" stroke="#2a3cd0" stroke-opacity="0.90" stroke-width="1.15"/>
<line x1="17.4" y1="471.2" x2="19.4" y2="468.9" stroke="#2a40cc" stroke-opacity="0.90" stroke-width="1.15"/>
<line x1="20.0" y1="474.9" x2="22.8" y2="473.8" stroke="#2c58c8" stroke-opacity="0.85" stroke-width="1.15"/>
<line x1="20.5" y1="479.4" x2="23.5" y2="479.7" stroke="#3a96cc" stroke-opacity="0.80" stroke-width="1.15"/>
<line x1="19.0" y1="483.6" x2="21.5" y2="485.3" stroke="#3c9cc8" stroke-opacity="0.60" stroke-width="1.15"/>
<line x1="15.9" y1="469.2" x2="16.5" y2="467.9" stroke="#4a74b0" stroke-opacity="0.35" stroke-width="0.92"/>
<line x1="19.6" y1="472.4" x2="20.7" y2="471.6" stroke="#4a74b0" stroke-opacity="0.35" stroke-width="0.92"/>
<line x1="21.3" y1="477.0" x2="22.7" y2="476.8" stroke="#4a74b0" stroke-opacity="0.35" stroke-width="0.92"/>
<line x1="20.8" y1="481.8" x2="22.1" y2="482.3" stroke="#4a74b0" stroke-opacity="0.35" stroke-width="0.92"/>
<rect x="22.2" y="487.4" width="2.4" height="1.4" rx="0.5" fill="#e4646a"/>
<circle cx="11.1" cy="478.3" r="8.8" fill="url(#kr)"/>
<circle cx="11.1" cy="478.3" r="7.0" fill="url(#kg)"/>
<line x1="11.1" y1="477.0" x2="11.1" y2="472.4" stroke="#f0f0f0" stroke-width="1.6" stroke-linecap="round"/>
<line x1="80.7" y1="468.8" x2="80.0" y2="465.9" stroke="#2a3cd0" stroke-opacity="0.90" stroke-width="1.15"/>
<line x1="76.7" y1="470.9" x2="74.7" y2="468.6" stroke="#2a40cc" stroke-opacity="0.90" stroke-width="1.15"/>
<line x1="74.1" y1="474.6" x2="71.3" y2="473.5" stroke="#2c58c8" stroke-opacity="0.85" stroke-width="1.15"/>
<line x1="73.6" y1="479.1" x2="70.6" y2="479.4" stroke="#3a96cc" stroke-opacity="0.80" stroke-width="1.15"/>
<line x1="75.1" y1="483.3" x2="72.6" y2="485.0" stroke="#3c9cc8" stroke-opacity="0.60" stroke-width="1.15"/>
<line x1="83.0" y1="467.7" x2="83.0" y2="466.3" stroke="#4a74b0" stroke-opacity="0.35" stroke-width="0.92"/>
<line x1="78.2" y1="468.9" x2="77.6" y2="467.6" stroke="#4a74b0" stroke-opacity="0.35" stroke-width="0.92"/>
<line x1="74.5" y1="472.1" x2="73.4" y2="471.3" stroke="#4a74b0" stroke-opacity="0.35" stroke-width="0.92"/>
<line x1="72.8" y1="476.7" x2="71.4" y2="476.5" stroke="#4a74b0" stroke-opacity="0.35" stroke-width="0.92"/>
<line x1="73.3" y1="481.5" x2="72.0" y2="482.0" stroke="#4a74b0" stroke-opacity="0.35" stroke-width="0.92"/>
<rect x="69.5" y="487.1" width="2.4" height="1.4" rx="0.5" fill="#e4646a"/>
<line x1="85.3" y1="468.8" x2="86.0" y2="465.9" stroke="#2a3cd0" stroke-opacity="0.90" stroke-width="1.15"/>
<line x1="89.3" y1="470.9" x2="91.3" y2="468.6" stroke="#2a40cc" stroke-opacity="0.90" stroke-width="1.15"/>
<line x1="91.9" y1="474.6" x2="94.7" y2="473.5" stroke="#2c58c8" stroke-opacity="0.85" stroke-width="1.15"/>
<line x1="92.4" y1="479.1" x2="95.4" y2="479.4" stroke="#3a96cc" stroke-opacity="0.80" stroke-width="1.15"/>
<line x1="90.9" y1="483.3" x2="93.4" y2="485.0" stroke="#3c9cc8" stroke-opacity="0.60" stroke-width="1.15"/>
<line x1="87.8" y1="468.9" x2="88.4" y2="467.6" stroke="#4a74b0" stroke-opacity="0.35" stroke-width="0.92"/>
<line x1="91.5" y1="472.1" x2="92.6" y2="471.3" stroke="#4a74b0" stroke-opacity="0.35" stroke-width="0.92"/>
<line x1="93.2" y1="476.7" x2="94.6" y2="476.5" stroke="#4a74b0" stroke-opacity="0.35" stroke-width="0.92"/>
<line x1="92.7" y1="481.5" x2="94.0" y2="482.0" stroke="#4a74b0" stroke-opacity="0.35" stroke-width="0.92"/>
<rect x="94.1" y="487.1" width="2.4" height="1.4" rx="0.5" fill="#e4646a"/>
<circle cx="83.0" cy="478.0" r="8.8" fill="url(#kr)"/>
<circle cx="83.0" cy="478.0" r="7.0" fill="url(#kg)"/>
<line x1="84.2" y1="477.6" x2="88.6" y2="476.2" stroke="#f0f0f0" stroke-width="1.6" stroke-linecap="round"/>
<line x1="150.4" y1="468.8" x2="149.7" y2="465.9" stroke="#2a3cd0" stroke-opacity="0.90" stroke-width="1.15"/>
<line x1="146.4" y1="470.9" x2="144.4" y2="468.6" stroke="#2a40cc" stroke-opacity="0.90" stroke-width="1.15"/>
<line x1="143.8" y1="474.6" x2="141.0" y2="473.5" stroke="#2c58c8" stroke-opacity="0.85" stroke-width="1.15"/>
<line x1="143.3" y1="479.1" x2="140.3" y2="479.4" stroke="#3a96cc" stroke-opacity="0.80" stroke-width="1.15"/>
<line x1="144.8" y1="483.3" x2="142.3" y2="485.0" stroke="#3c9cc8" stroke-opacity="0.60" stroke-width="1.15"/>
<line x1="152.7" y1="467.7" x2="152.7" y2="466.3" stroke="#4a74b0" stroke-opacity="0.35" stroke-width="0.92"/>
<line x1="147.9" y1="468.9" x2="147.3" y2="467.6" stroke="#4a74b0" stroke-opacity="0.35" stroke-width="0.92"/>
<line x1="144.2" y1="472.1" x2="143.1" y2="471.3" stroke="#4a74b0" stroke-opacity="0.35" stroke-width="0.92"/>
<line x1="142.5" y1="476.7" x2="141.1" y2="476.5" stroke="#4a74b0" stroke-opacity="0.35" stroke-width="0.92"/>
<line x1="143.0" y1="481.5" x2="141.7" y2="482.0" stroke="#4a74b0" stroke-opacity="0.35" stroke-width="0.92"/>
<rect x="139.2" y="487.1" width="2.4" height="1.4" rx="0.5" fill="#e4646a"/>
<line x1="155.0" y1="468.8" x2="155.7" y2="465.9" stroke="#2a3cd0" stroke-opacity="0.90" stroke-width="1.15"/>
<line x1="159.0" y1="470.9" x2="161.0" y2="468.6" stroke="#2a40cc" stroke-opacity="0.90" stroke-width="1.15"/>
<line x1="161.6" y1="474.6" x2="164.4" y2="473.5" stroke="#2c58c8" stroke-opacity="0.85" stroke-width="1.15"/>
<line x1="162.1" y1="479.1" x2="165.1" y2="479.4" stroke="#3a96cc" stroke-opacity="0.80" stroke-width="1.15"/>
<line x1="160.6" y1="483.3" x2="163.1" y2="485.0" stroke="#3c9cc8" stroke-opacity="0.60" stroke-width="1.15"/>
<line x1="157.5" y1="468.9" x2="158.1" y2="467.6" stroke="#4a74b0" stroke-opacity="0.35" stroke-width="0.92"/>
<line x1="161.2" y1="472.1" x2="162.3" y2="471.3" stroke="#4a74b0" stroke-opacity="0.35" stroke-width="0.92"/>
<line x1="162.9" y1="476.7" x2="164.3" y2="476.5" stroke="#4a74b0" stroke-opacity="0.35" stroke-width="0.92"/>
<line x1="162.4" y1="481.5" x2="163.7" y2="482.0" stroke="#4a74b0" stroke-opacity="0.35" stroke-width="0.92"/>
<rect x="163.8" y="487.1" width="2.4" height="1.4" rx="0.5" fill="#e4646a"/>
<circle cx="152.7" cy="478.0" r="8.8" fill="url(#kr)"/>
<circle cx="152.7" cy="478.0" r="7.0" fill="url(#kg)"/>
<line x1="153.9" y1="477.6" x2="158.3" y2="476.2" stroke="#f0f0f0" stroke-width="1.6" stroke-linecap="round"/>
<line x1="223.9" y1="468.8" x2="223.2" y2="465.9" stroke="#2a3cd0" stroke-opacity="0.90" stroke-width="1.15"/>
<line x1="219.9" y1="470.9" x2="217.9" y2="468.6" stroke="#2a40cc" stroke-opacity="0.90" stroke-width="1.15"/>
<line x1="217.3" y1="474.6" x2="214.5" y2="473.5" stroke="#2c58c8" stroke-opacity="0.85" stroke-width="1.15"/>
<line x1="216.8" y1="479.1" x2="213.8" y2="479.4" stroke="#3a96cc" stroke-opacity="0.80" stroke-width="1.15"/>
<line x1="218.3" y1="483.3" x2="215.8" y2="485.0" stroke="#3c9cc8" stroke-opacity="0.60" stroke-width="1.15"/>
<line x1="226.2" y1="467.7" x2="226.2" y2="466.3" stroke="#4a74b0" stroke-opacity="0.35" stroke-width="0.92"/>
<line x1="221.4" y1="468.9" x2="220.8" y2="467.6" stroke="#4a74b0" stroke-opacity="0.35" stroke-width="0.92"/>
<line x1="217.7" y1="472.1" x2="216.6" y2="471.3" stroke="#4a74b0" stroke-opacity="0.35" stroke-width="0.92"/>
<line x1="216.0" y1="476.7" x2="214.6" y2="476.5" stroke="#4a74b0" stroke-opacity="0.35" stroke-width="0.92"/>
<line x1="216.5" y1="481.5" x2="215.2" y2="482.0" stroke="#4a74b0" stroke-opacity="0.35" stroke-width="0.92"/>
<rect x="212.7" y="487.1" width="2.4" height="1.4" rx="0.5" fill="#e4646a"/>
<line x1="228.5" y1="468.8" x2="229.2" y2="465.9" stroke="#2a3cd0" stroke-opacity="0.90" stroke-width="1.15"/>
<line x1="232.5" y1="470.9" x2="234.5" y2="468.6" stroke="#2a40cc" stroke-opacity="0.90" stroke-width="1.15"/>
<line x1="235.1" y1="474.6" x2="237.9" y2="473.5" stroke="#2c58c8" stroke-opacity="0.85" stroke-width="1.15"/>
<line x1="235.6" y1="479.1" x2="238.6" y2="479.4" stroke="#3a96cc" stroke-opacity="0.80" stroke-width="1.15"/>
<line x1="234.1" y1="483.3" x2="236.6" y2="485.0" stroke="#3c9cc8" stroke-opacity="0.60" stroke-width="1.15"/>
<line x1="231.0" y1="468.9" x2="231.6" y2="467.6" stroke="#4a74b0" stroke-opacity="0.35" stroke-width="0.92"/>
<line x1="234.7" y1="472.1" x2="235.8" y2="471.3" stroke="#4a74b0" stroke-opacity="0.35" stroke-width="0.92"/>
<line x1="236.4" y1="476.7" x2="237.8" y2="476.5" stroke="#4a74b0" stroke-opacity="0.35" stroke-width="0.92"/>
<line x1="235.9" y1="481.5" x2="237.2" y2="482.0" stroke="#4a74b0" stroke-opacity="0.35" stroke-width="0.92"/>
<rect x="237.3" y="487.1" width="2.4" height="1.4" rx="0.5" fill="#e4646a"/>
<circle cx="226.2" cy="478.0" r="8.8" fill="url(#kr)"/>
<circle cx="226.2" cy="478.0" r="7.0" fill="url(#kg)"/>
<line x1="227.5" y1="477.7" x2="231.9" y2="476.6" stroke="#f0f0f0" stroke-width="1.6" stroke-linecap="round"/>
<line x1="300.7" y1="468.8" x2="300.0" y2="465.9" stroke="#2a3cd0" stroke-opacity="0.90" stroke-width="1.15"/>
<line x1="296.7" y1="470.9" x2="294.7" y2="468.6" stroke="#2a40cc" stroke-opacity="0.90" stroke-width="1.15"/>
<line x1="294.1" y1="474.6" x2="291.3" y2="473.5" stroke="#2c58c8" stroke-opacity="0.85" stroke-width="1.15"/>
<line x1="293.6" y1="479.1" x2="290.6" y2="479.4" stroke="#3a96cc" stroke-opacity="0.80" stroke-width="1.15"/>
<line x1="295.1" y1="483.3" x2="292.6" y2="485.0" stroke="#3c9cc8" stroke-opacity="0.60" stroke-width="1.15"/>
<line x1="303.0" y1="467.7" x2="303.0" y2="466.3" stroke="#4a74b0" stroke-opacity="0.35" stroke-width="0.92"/>
<line x1="298.2" y1="468.9" x2="297.6" y2="467.6" stroke="#4a74b0" stroke-opacity="0.35" stroke-width="0.92"/>
<line x1="294.5" y1="472.1" x2="293.4" y2="471.3" stroke="#4a74b0" stroke-opacity="0.35" stroke-width="0.92"/>
<line x1="292.8" y1="476.7" x2="291.4" y2="476.5" stroke="#4a74b0" stroke-opacity="0.35" stroke-width="0.92"/>
<line x1="293.3" y1="481.5" x2="292.0" y2="482.0" stroke="#4a74b0" stroke-opacity="0.35" stroke-width="0.92"/>
<rect x="289.5" y="487.1" width="2.4" height="1.4" rx="0.5" fill="#e4646a"/>
<line x1="305.3" y1="468.8" x2="306.0" y2="465.9" stroke="#2a3cd0" stroke-opacity="0.90" stroke-width="1.15"/>
<line x1="309.3" y1="470.9" x2="311.3" y2="468.6" stroke="#2a40cc" stroke-opacity="0.90" stroke-width="1.15"/>
<line x1="311.9" y1="474.6" x2="314.7" y2="473.5" stroke="#2c58c8" stroke-opacity="0.85" stroke-width="1.15"/>
<line x1="312.4" y1="479.1" x2="315.4" y2="479.4" stroke="#3a96cc" stroke-opacity="0.80" stroke-width="1.15"/>
<line x1="310.9" y1="483.3" x2="313.4" y2="485.0" stroke="#3c9cc8" stroke-opacity="0.60" stroke-width="1.15"/>
<line x1="307.8" y1="468.9" x2="308.4" y2="467.6" stroke="#4a74b0" stroke-opacity="0.35" stroke-width="0.92"/>
<line x1="311.5" y1="472.1" x2="312.6" y2="471.3" stroke="#4a74b0" stroke-opacity="0.35" stroke-width="0.92"/>
<line x1="313.2" y1="476.7" x2="314.6" y2="476.5" stroke="#4a74b0" stroke-opacity="0.35" stroke-width="0.92"/>
<line x1="312.7" y1="481.5" x2="314.0" y2="482.0" stroke="#4a74b0" stroke-opacity="0.35" stroke-width="0.92"/>
<rect x="314.1" y="487.1" width="2.4" height="1.4" rx="0.5" fill="#e4646a"/>
<circle cx="303.0" cy="478.0" r="8.8" fill="url(#kr)"/>
<circle cx="303.0" cy="478.0" r="7.0" fill="url(#kg)"/>
<line x1="303.0" y1="476.7" x2="303.0" y2="472.1" stroke="#f0f0f0" stroke-width="1.6" stroke-linecap="round"/>
<line x1="382.0" y1="467.8" x2="381.3" y2="464.9" stroke="#2a3cd0" stroke-opacity="0.90" stroke-width="1.15"/>
<line x1="378.0" y1="469.9" x2="376.0" y2="467.6" stroke="#2a40cc" stroke-opacity="0.90" stroke-width="1.15"/>
<line x1="375.4" y1="473.6" x2="372.6" y2="472.5" stroke="#2c58c8" stroke-opacity="0.85" stroke-width="1.15"/>
<line x1="374.9" y1="478.1" x2="371.9" y2="478.4" stroke="#3a96cc" stroke-opacity="0.80" stroke-width="1.15"/>
<line x1="376.4" y1="482.3" x2="373.9" y2="484.0" stroke="#3c9cc8" stroke-opacity="0.60" stroke-width="1.15"/>
<line x1="384.3" y1="466.7" x2="384.3" y2="465.3" stroke="#4a74b0" stroke-opacity="0.35" stroke-width="0.92"/>
<line x1="379.5" y1="467.9" x2="378.9" y2="466.6" stroke="#4a74b0" stroke-opacity="0.35" stroke-width="0.92"/>
<line x1="375.8" y1="471.1" x2="374.7" y2="470.3" stroke="#4a74b0" stroke-opacity="0.35" stroke-width="0.92"/>
<line x1="374.1" y1="475.7" x2="372.7" y2="475.5" stroke="#4a74b0" stroke-opacity="0.35" stroke-width="0.92"/>
<line x1="374.6" y1="480.5" x2="373.3" y2="481.0" stroke="#4a74b0" stroke-opacity="0.35" stroke-width="0.92"/>
<rect x="370.8" y="486.1" width="2.4" height="1.4" rx="0.5" fill="#e4646a"/>
<line x1="386.6" y1="467.8" x2="387.3" y2="464.9" stroke="#2a3cd0" stroke-opacity="0.90" stroke-width="1.15"/>
<line x1="390.6" y1="469.9" x2="392.6" y2="467.6" stroke="#2a40cc" stroke-opacity="0.90" stroke-width="1.15"/>
<line x1="393.2" y1="473.6" x2="396.0" y2="472.5" stroke="#2c58c8" stroke-opacity="0.85" stroke-width="1.15"/>
<line x1="393.7" y1="478.1" x2="396.7" y2="478.4" stroke="#3a96cc" stroke-opacity="0.80" stroke-width="1.15"/>
<line x1="392.2" y1="482.3" x2="394.7" y2="484.0" stroke="#3c9cc8" stroke-opacity="0.60" stroke-width="1.15"/>
<line x1="389.1" y1="467.9" x2="389.7" y2="466.6" stroke="#4a74b0" stroke-opacity="0.35" stroke-width="0.92"/>
<line x1="392.8" y1="471.1" x2="393.9" y2="470.3" stroke="#4a74b0" stroke-opacity="0.35" stroke-width="0.92"/>
<line x1="394.5" y1="475.7" x2="395.9" y2="475.5" stroke="#4a74b0" stroke-opacity="0.35" stroke-width="0.92"/>
<line x1="394.0" y1="480.5" x2="395.3" y2="481.0" stroke="#4a74b0" stroke-opacity="0.35" stroke-width="0.92"/>
<rect x="395.4" y="486.1" width="2.4" height="1.4" rx="0.5" fill="#e4646a"/>
<circle cx="384.3" cy="477.0" r="8.8" fill="url(#kr)"/>
<circle cx="384.3" cy="477.0" r="7.0" fill="url(#kg)"/>
<line x1="384.8" y1="475.8" x2="386.8" y2="471.7" stroke="#f0f0f0" stroke-width="1.6" stroke-linecap="round"/>
<line x1="421.7" y1="467.8" x2="421.0" y2="464.9" stroke="#2a3cd0" stroke-opacity="0.90" stroke-width="1.15"/>
<line x1="417.7" y1="469.9" x2="415.7" y2="467.6" stroke="#2a40cc" stroke-opacity="0.90" stroke-width="1.15"/>
<line x1="415.1" y1="473.6" x2="412.3" y2="472.5" stroke="#2c58c8" stroke-opacity="0.85" stroke-width="1.15"/>
<line x1="414.6" y1="478.1" x2="411.6" y2="478.4" stroke="#3a96cc" stroke-opacity="0.80" stroke-width="1.15"/>
<line x1="416.1" y1="482.3" x2="413.6" y2="484.0" stroke="#3c9cc8" stroke-opacity="0.60" stroke-width="1.15"/>
<line x1="424.0" y1="466.7" x2="424.0" y2="465.3" stroke="#4a74b0" stroke-opacity="0.35" stroke-width="0.92"/>
<line x1="419.2" y1="467.9" x2="418.6" y2="466.6" stroke="#4a74b0" stroke-opacity="0.35" stroke-width="0.92"/>
<line x1="415.5" y1="471.1" x2="414.4" y2="470.3" stroke="#4a74b0" stroke-opacity="0.35" stroke-width="0.92"/>
<line x1="413.8" y1="475.7" x2="412.4" y2="475.5" stroke="#4a74b0" stroke-opacity="0.35" stroke-width="0.92"/>
<line x1="414.3" y1="480.5" x2="413.0" y2="481.0" stroke="#4a74b0" stroke-opacity="0.35" stroke-width="0.92"/>
<rect x="410.5" y="486.1" width="2.4" height="1.4" rx="0.5" fill="#e4646a"/>
<line x1="426.3" y1="467.8" x2="427.0" y2="464.9" stroke="#2a3cd0" stroke-opacity="0.90" stroke-width="1.15"/>
<line x1="430.3" y1="469.9" x2="432.3" y2="467.6" stroke="#2a40cc" stroke-opacity="0.90" stroke-width="1.15"/>
<line x1="432.9" y1="473.6" x2="435.7" y2="472.5" stroke="#2c58c8" stroke-opacity="0.85" stroke-width="1.15"/>
<line x1="433.4" y1="478.1" x2="436.4" y2="478.4" stroke="#3a96cc" stroke-opacity="0.80" stroke-width="1.15"/>
<line x1="431.9" y1="482.3" x2="434.4" y2="484.0" stroke="#3c9cc8" stroke-opacity="0.60" stroke-width="1.15"/>
<line x1="428.8" y1="467.9" x2="429.4" y2="466.6" stroke="#4a74b0" stroke-opacity="0.35" stroke-width="0.92"/>
<line x1="432.5" y1="471.1" x2="433.6" y2="470.3" stroke="#4a74b0" stroke-opacity="0.35" stroke-width="0.92"/>
<line x1="434.2" y1="475.7" x2="435.6" y2="475.5" stroke="#4a74b0" stroke-opacity="0.35" stroke-width="0.92"/>
<line x1="433.7" y1="480.5" x2="435.0" y2="481.0" stroke="#4a74b0" stroke-opacity="0.35" stroke-width="0.92"/>
<rect x="435.1" y="486.1" width="2.4" height="1.4" rx="0.5" fill="#e4646a"/>
<circle cx="424.0" cy="477.0" r="8.8" fill="url(#kr)"/>
<circle cx="424.0" cy="477.0" r="7.0" fill="url(#kg)"/>
<line x1="423.6" y1="475.8" x2="422.2" y2="471.4" stroke="#f0f0f0" stroke-width="1.6" stroke-linecap="round"/>
<line x1="529.1" y1="481.9" x2="528.6" y2="479.7" stroke="#2a3cd0" stroke-opacity="0.90" stroke-width="0.90"/>
<line x1="525.9" y1="483.6" x2="524.4" y2="481.9" stroke="#2a40cc" stroke-opacity="0.90" stroke-width="0.90"/>
<line x1="523.8" y1="486.6" x2="521.7" y2="485.8" stroke="#2c58c8" stroke-opacity="0.85" stroke-width="0.90"/>
<line x1="523.3" y1="490.3" x2="521.1" y2="490.5" stroke="#3a96cc" stroke-opacity="0.80" stroke-width="0.90"/>
<line x1="524.6" y1="493.7" x2="522.7" y2="495.0" stroke="#3c9cc8" stroke-opacity="0.60" stroke-width="0.90"/>
<line x1="531.0" y1="480.9" x2="531.0" y2="480.2" stroke="#4a74b0" stroke-opacity="0.35" stroke-width="0.72"/>
<line x1="527.0" y1="481.9" x2="526.7" y2="481.3" stroke="#4a74b0" stroke-opacity="0.35" stroke-width="0.72"/>
<line x1="524.0" y1="484.5" x2="523.4" y2="484.1" stroke="#4a74b0" stroke-opacity="0.35" stroke-width="0.72"/>
<line x1="522.6" y1="488.3" x2="521.9" y2="488.2" stroke="#4a74b0" stroke-opacity="0.35" stroke-width="0.72"/>
<line x1="523.0" y1="492.3" x2="522.4" y2="492.5" stroke="#4a74b0" stroke-opacity="0.35" stroke-width="0.72"/>
<rect x="521.2" y="495.5" width="1.6" height="1.4" rx="0.5" fill="#e4646a"/>
<line x1="532.9" y1="481.9" x2="533.4" y2="479.7" stroke="#2a3cd0" stroke-opacity="0.90" stroke-width="0.90"/>
<line x1="536.1" y1="483.6" x2="537.6" y2="481.9" stroke="#2a40cc" stroke-opacity="0.90" stroke-width="0.90"/>
<line x1="538.2" y1="486.6" x2="540.3" y2="485.8" stroke="#2c58c8" stroke-opacity="0.85" stroke-width="0.90"/>
<line x1="538.7" y1="490.3" x2="540.9" y2="490.5" stroke="#3a96cc" stroke-opacity="0.80" stroke-width="0.90"/>
<line x1="537.4" y1="493.7" x2="539.3" y2="495.0" stroke="#3c9cc8" stroke-opacity="0.60" stroke-width="0.90"/>
<line x1="535.0" y1="481.9" x2="535.3" y2="481.3" stroke="#4a74b0" stroke-opacity="0.35" stroke-width="0.72"/>
<line x1="538.0" y1="484.5" x2="538.6" y2="484.1" stroke="#4a74b0" stroke-opacity="0.35" stroke-width="0.72"/>
<line x1="539.4" y1="488.3" x2="540.1" y2="488.2" stroke="#4a74b0" stroke-opacity="0.35" stroke-width="0.72"/>
<line x1="539.0" y1="492.3" x2="539.6" y2="492.5" stroke="#4a74b0" stroke-opacity="0.35" stroke-width="0.72"/>
<rect x="538.4" y="495.5" width="1.6" height="1.4" rx="0.5" fill="#e4646a"/>
<circle cx="531.0" cy="489.4" r="7.1" fill="url(#kr)"/>
<circle cx="531.0" cy="489.4" r="5.7" fill="url(#kg)"/>
<line x1="529.9" y1="490.1" x2="527.6" y2="491.8" stroke="#f0f0f0" stroke-width="1.2" stroke-linecap="round"/>
<line x1="706.1" y1="482.1" x2="705.6" y2="479.9" stroke="#2a3cd0" stroke-opacity="0.90" stroke-width="0.90"/>
<line x1="702.9" y1="483.8" x2="701.4" y2="482.1" stroke="#2a40cc" stroke-opacity="0.90" stroke-width="0.90"/>
<line x1="700.8" y1="486.8" x2="698.7" y2="486.0" stroke="#2c58c8" stroke-opacity="0.85" stroke-width="0.90"/>
<line x1="700.3" y1="490.5" x2="698.1" y2="490.7" stroke="#3a96cc" stroke-opacity="0.80" stroke-width="0.90"/>
<line x1="701.6" y1="493.9" x2="699.7" y2="495.2" stroke="#3c9cc8" stroke-opacity="0.60" stroke-width="0.90"/>
<line x1="708.0" y1="481.1" x2="708.0" y2="480.4" stroke="#4a74b0" stroke-opacity="0.35" stroke-width="0.72"/>
<line x1="704.0" y1="482.1" x2="703.7" y2="481.5" stroke="#4a74b0" stroke-opacity="0.35" stroke-width="0.72"/>
<line x1="701.0" y1="484.7" x2="700.4" y2="484.3" stroke="#4a74b0" stroke-opacity="0.35" stroke-width="0.72"/>
<line x1="699.6" y1="488.5" x2="698.9" y2="488.4" stroke="#4a74b0" stroke-opacity="0.35" stroke-width="0.72"/>
<line x1="700.0" y1="492.5" x2="699.4" y2="492.7" stroke="#4a74b0" stroke-opacity="0.35" stroke-width="0.72"/>
<rect x="698.2" y="495.7" width="1.6" height="1.4" rx="0.5" fill="#e4646a"/>
<line x1="709.9" y1="482.1" x2="710.4" y2="479.9" stroke="#2a3cd0" stroke-opacity="0.90" stroke-width="0.90"/>
<line x1="713.1" y1="483.8" x2="714.6" y2="482.1" stroke="#2a40cc" stroke-opacity="0.90" stroke-width="0.90"/>
<line x1="715.2" y1="486.8" x2="717.3" y2="486.0" stroke="#2c58c8" stroke-opacity="0.85" stroke-width="0.90"/>
<line x1="715.7" y1="490.5" x2="717.9" y2="490.7" stroke="#3a96cc" stroke-opacity="0.80" stroke-width="0.90"/>
<line x1="714.4" y1="493.9" x2="716.3" y2="495.2" stroke="#3c9cc8" stroke-opacity="0.60" stroke-width="0.90"/>
<line x1="712.0" y1="482.1" x2="712.3" y2="481.5" stroke="#4a74b0" stroke-opacity="0.35" stroke-width="0.72"/>
<line x1="715.0" y1="484.7" x2="715.6" y2="484.3" stroke="#4a74b0" stroke-opacity="0.35" stroke-width="0.72"/>
<line x1="716.4" y1="488.5" x2="717.1" y2="488.4" stroke="#4a74b0" stroke-opacity="0.35" stroke-width="0.72"/>
<line x1="716.0" y1="492.5" x2="716.6" y2="492.7" stroke="#4a74b0" stroke-opacity="0.35" stroke-width="0.72"/>
<rect x="715.4" y="495.7" width="1.6" height="1.4" rx="0.5" fill="#e4646a"/>
<circle cx="708.0" cy="489.6" r="7.1" fill="url(#kr)"/>
<circle cx="708.0" cy="489.6" r="5.7" fill="url(#kg)"/>
<line x1="706.9" y1="490.3" x2="704.6" y2="492.0" stroke="#f0f0f0" stroke-width="1.2" stroke-linecap="round"/><rect x="53.64" y="473.50" width="4.83" height="0.95" fill="#d6d6d6" rx="0.28"/><rect x="57.75" y="473.74" width="0.95" height="5.67" fill="#d6d6d6" rx="0.28"/><rect x="57.75" y="479.50" width="0.95" height="5.67" fill="#d6d6d6" rx="0.28"/><rect x="53.64" y="484.45" width="4.83" height="0.95" fill="#d6d6d6" rx="0.28"/><rect x="53.40" y="479.50" width="0.95" height="5.67" fill="#d6d6d6" rx="0.28"/><rect x="53.40" y="473.74" width="0.95" height="5.67" fill="#d6d6d6" rx="0.28"/><rect x="46.94" y="473.50" width="4.83" height="0.95" fill="#d6d6d6" rx="0.28"/><rect x="51.05" y="473.74" width="0.95" height="5.67" fill="#d6d6d6" rx="0.28"/><rect x="51.05" y="479.50" width="0.95" height="5.67" fill="#d6d6d6" rx="0.28"/><rect x="39.6" y="479" width="4.6" height="0.95" rx="0.3" fill="#d6d6d6"/><rect x="118.06" y="472.20" width="5.97" height="1.05" fill="#d6d6d6" rx="0.32"/><rect x="123.25" y="472.46" width="1.05" height="6.28" fill="#d6d6d6" rx="0.32"/><rect x="123.25" y="478.85" width="1.05" height="6.28" fill="#d6d6d6" rx="0.32"/><rect x="109.81" y="472.20" width="5.97" height="1.05" fill="#d6d6d6" rx="0.32"/><rect x="115.00" y="472.46" width="1.05" height="6.28" fill="#d6d6d6" rx="0.32"/><rect x="115.00" y="478.85" width="1.05" height="6.28" fill="#d6d6d6" rx="0.32"/><rect x="193.21" y="471.40" width="5.97" height="1.25" fill="#f01414" rx="0.38"/><rect x="198.25" y="471.71" width="1.25" height="6.17" fill="#f01414" rx="0.38"/><rect x="198.25" y="478.01" width="1.25" height="6.17" fill="#f01414" rx="0.38"/><rect x="185.01" y="471.40" width="5.97" height="1.25" fill="#f01414" rx="0.38"/><rect x="190.05" y="471.71" width="1.25" height="6.17" fill="#f01414" rx="0.38"/><rect x="190.05" y="478.01" width="1.25" height="6.17" fill="#f01414" rx="0.38"/><rect x="261.76" y="472.00" width="5.88" height="1.45" fill="#16ec16" rx="0.43"/><rect x="266.55" y="472.36" width="1.45" height="6.37" fill="#16ec16" rx="0.43"/><rect x="266.55" y="478.87" width="1.45" height="6.37" fill="#16ec16" rx="0.43"/><rect x="261.76" y="484.15" width="5.88" height="1.45" fill="#16ec16" rx="0.43"/><rect x="261.40" y="478.87" width="1.45" height="6.37" fill="#16ec16" rx="0.43"/><rect x="261.40" y="472.36" width="1.45" height="6.37" fill="#16ec16" rx="0.43"/><rect x="261.76" y="478.07" width="5.88" height="1.45" fill="#16ec16" rx="0.43"/><rect x="253.56" y="472.00" width="5.88" height="1.45" fill="#16ec16" rx="0.43"/><rect x="258.35" y="472.36" width="1.45" height="6.37" fill="#16ec16" rx="0.43"/><rect x="258.35" y="478.87" width="1.45" height="6.37" fill="#16ec16" rx="0.43"/><rect x="353.25" y="471.60" width="6.10" height="1.00" fill="#d6d6d6" rx="0.30"/><rect x="358.60" y="471.85" width="1.00" height="6.10" fill="#d6d6d6" rx="0.30"/><rect x="358.60" y="478.05" width="1.00" height="6.10" fill="#d6d6d6" rx="0.30"/><rect x="353.25" y="483.40" width="6.10" height="1.00" fill="#d6d6d6" rx="0.30"/><rect x="353.00" y="478.05" width="1.00" height="6.10" fill="#d6d6d6" rx="0.30"/><rect x="353.00" y="471.85" width="1.00" height="6.10" fill="#d6d6d6" rx="0.30"/><rect x="180.65" y="517.61" width="1.65" height="6.91" fill="#1c9020" rx="0.49"/><rect x="180.65" y="524.68" width="1.65" height="6.91" fill="#1c9020" rx="0.49"/><rect x="173.00" y="517.61" width="1.65" height="6.91" fill="#1c9020" rx="0.49"/><rect x="173.41" y="523.77" width="8.48" height="1.65" fill="#1c9020" rx="0.49"/><rect x="186.31" y="517.20" width="8.48" height="1.65" fill="#1c9020" rx="0.49"/><rect x="193.55" y="517.61" width="1.65" height="6.91" fill="#1c9020" rx="0.49"/><rect x="193.55" y="524.68" width="1.65" height="6.91" fill="#1c9020" rx="0.49"/><rect x="186.31" y="530.35" width="8.48" height="1.65" fill="#1c9020" rx="0.49"/><rect x="186.31" y="523.77" width="8.48" height="1.65" fill="#1c9020" rx="0.49"/><rect x="198.81" y="517.20" width="8.48" height="1.65" fill="#1c9020" rx="0.49"/><rect x="206.05" y="517.61" width="1.65" height="6.91" fill="#1c9020" rx="0.49"/><rect x="206.05" y="524.68" width="1.65" height="6.91" fill="#1c9020" rx="0.49"/><rect x="198.81" y="530.35" width="8.48" height="1.65" fill="#1c9020" rx="0.49"/><rect x="198.81" y="523.77" width="8.48" height="1.65" fill="#1c9020" rx="0.49"/><rect x="213.91" y="517.20" width="8.48" height="1.65" fill="#1c9020" rx="0.49"/><rect x="221.15" y="517.61" width="1.65" height="6.91" fill="#1c9020" rx="0.49"/><rect x="213.91" y="530.35" width="8.48" height="1.65" fill="#1c9020" rx="0.49"/><rect x="213.50" y="524.68" width="1.65" height="6.91" fill="#1c9020" rx="0.49"/><rect x="213.91" y="523.77" width="8.48" height="1.65" fill="#1c9020" rx="0.49"/><rect x="226.71" y="517.20" width="8.48" height="1.65" fill="#1c9020" rx="0.49"/><rect x="233.95" y="524.68" width="1.65" height="6.91" fill="#1c9020" rx="0.49"/><rect x="226.71" y="530.35" width="8.48" height="1.65" fill="#1c9020" rx="0.49"/><rect x="226.30" y="517.61" width="1.65" height="6.91" fill="#1c9020" rx="0.49"/><rect x="226.71" y="523.77" width="8.48" height="1.65" fill="#1c9020" rx="0.49"/><rect x="239.21" y="517.20" width="8.48" height="1.65" fill="#1c9020" rx="0.49"/><rect x="246.45" y="517.61" width="1.65" height="6.91" fill="#1c9020" rx="0.49"/><rect x="246.45" y="524.68" width="1.65" height="6.91" fill="#1c9020" rx="0.49"/><rect x="239.21" y="530.35" width="8.48" height="1.65" fill="#1c9020" rx="0.49"/><rect x="238.80" y="524.68" width="1.65" height="6.91" fill="#1c9020" rx="0.49"/><rect x="238.80" y="517.61" width="1.65" height="6.91" fill="#1c9020" rx="0.49"/><rect x="256.41" y="517.20" width="8.48" height="1.65" fill="#1c9020" rx="0.49"/><rect x="263.65" y="517.61" width="1.65" height="6.91" fill="#1c9020" rx="0.49"/><rect x="263.65" y="524.68" width="1.65" height="6.91" fill="#1c9020" rx="0.49"/><rect x="256.41" y="530.35" width="8.48" height="1.65" fill="#1c9020" rx="0.49"/><rect x="256.00" y="524.68" width="1.65" height="6.91" fill="#1c9020" rx="0.49"/><rect x="256.00" y="517.61" width="1.65" height="6.91" fill="#1c9020" rx="0.49"/><rect x="268.61" y="517.20" width="8.48" height="1.65" fill="#1c9020" rx="0.49"/><rect x="275.85" y="517.61" width="1.65" height="6.91" fill="#1c9020" rx="0.49"/><rect x="275.85" y="524.68" width="1.65" height="6.91" fill="#1c9020" rx="0.49"/><rect x="268.61" y="530.35" width="8.48" height="1.65" fill="#1c9020" rx="0.49"/><rect x="268.20" y="524.68" width="1.65" height="6.91" fill="#1c9020" rx="0.49"/><rect x="268.20" y="517.61" width="1.65" height="6.91" fill="#1c9020" rx="0.49"/><rect x="280.91" y="517.20" width="8.48" height="1.65" fill="#1c9020" rx="0.49"/><rect x="288.15" y="517.61" width="1.65" height="6.91" fill="#1c9020" rx="0.49"/><rect x="288.15" y="524.68" width="1.65" height="6.91" fill="#1c9020" rx="0.49"/><rect x="280.91" y="530.35" width="8.48" height="1.65" fill="#1c9020" rx="0.49"/><rect x="280.50" y="524.68" width="1.65" height="6.91" fill="#1c9020" rx="0.49"/><rect x="280.50" y="517.61" width="1.65" height="6.91" fill="#1c9020" rx="0.49"/><rect x="209.6" y="530.2" width="1.9" height="1.9" fill="#1c9020"/>
 <!-- s-meter art -->
 <g>
 <g font-family="Liberation Sans, sans-serif" font-weight="bold" fill="#ff5a1c" text-anchor="middle"><line x1="335.3" y1="522.9" x2="333.2" y2="519.4" stroke="#ff5a1c" stroke-width="1.0"/><line x1="339.2" y1="518.9" x2="338.1" y2="516.8" stroke="#ff5a1c" stroke-width="0.8"/><line x1="344.6" y1="518.3" x2="343.2" y2="514.5" stroke="#ff5a1c" stroke-width="1.0"/><text x="345.9" y="523.2" font-size="5.8" transform="rotate(-21.3 345.9 521.4)">3</text><line x1="349.1" y1="515.0" x2="348.4" y2="512.7" stroke="#ff5a1c" stroke-width="0.8"/><line x1="354.6" y1="515.3" x2="353.8" y2="511.4" stroke="#ff5a1c" stroke-width="1.0"/><text x="355.3" y="520.4" font-size="5.8" transform="rotate(-11.7 355.3 518.6)">5</text><line x1="359.6" y1="512.9" x2="359.3" y2="510.5" stroke="#ff5a1c" stroke-width="0.8"/><line x1="365.0" y1="514.0" x2="364.9" y2="510.0" stroke="#ff5a1c" stroke-width="1.0"/><text x="365.1" y="519.2" font-size="5.8" transform="rotate(-2.0 365.1 517.4)">7</text><line x1="370.3" y1="512.5" x2="370.4" y2="510.1" stroke="#ff5a1c" stroke-width="0.8"/><line x1="375.4" y1="514.6" x2="376.0" y2="510.6" stroke="#ff5a1c" stroke-width="1.0"/><text x="375.0" y="519.7" font-size="5.8" transform="rotate(7.6 375.0 517.9)">9</text><line x1="380.9" y1="513.9" x2="381.5" y2="511.6" stroke="#ff5a1c" stroke-width="0.8"/><line x1="385.6" y1="516.8" x2="386.8" y2="513.0" stroke="#ff5a1c" stroke-width="1.0"/><text x="384.6" y="521.9" font-size="4.6" transform="rotate(17.3 384.6 520.1)">+20</text><line x1="391.2" y1="517.1" x2="392.1" y2="514.9" stroke="#ff5a1c" stroke-width="0.8"/><line x1="395.3" y1="520.7" x2="397.1" y2="517.2" stroke="#ff5a1c" stroke-width="1.0"/><text x="393.8" y="525.6" font-size="4.6" transform="rotate(27.0 393.8 523.8)">+40</text><line x1="400.7" y1="521.9" x2="402.0" y2="519.9" stroke="#ff5a1c" stroke-width="0.8"/><line x1="404.2" y1="526.2" x2="406.6" y2="523.0" stroke="#ff5a1c" stroke-width="1.0"/><text x="402.2" y="530.8" font-size="4.6" transform="rotate(36.6 402.2 529.0)">+60</text><rect x="326.6" y="521.6" width="4.6" height="2.6" rx="0.6" fill="#ff3058" transform="rotate(-32 329 523)"/><text x="332" y="530.4" font-size="4.6" transform="rotate(-32 332 528.6)">dB</text><text x="333.4" y="524.8" font-size="4" transform="rotate(-31 333.4 523.6)">1</text></g><line x1="337.4" y1="537.6" x2="335.9" y2="536.0" stroke="#ff5a1c" stroke-opacity="0.85" stroke-width="0.8"/><line x1="339.7" y1="535.6" x2="338.9" y2="534.6" stroke="#ff5a1c" stroke-opacity="0.85" stroke-width="0.8"/><line x1="342.1" y1="533.8" x2="341.4" y2="532.7" stroke="#ff5a1c" stroke-opacity="0.85" stroke-width="0.8"/><line x1="344.6" y1="532.2" x2="344.0" y2="531.1" stroke="#ff5a1c" stroke-opacity="0.85" stroke-width="0.8"/><line x1="347.3" y1="530.7" x2="346.7" y2="529.5" stroke="#ff5a1c" stroke-opacity="0.85" stroke-width="0.8"/><line x1="350.0" y1="529.4" x2="349.2" y2="527.4" stroke="#ff5a1c" stroke-opacity="0.85" stroke-width="0.8"/><line x1="352.9" y1="528.4" x2="352.4" y2="527.1" stroke="#ff5a1c" stroke-opacity="0.85" stroke-width="0.8"/><line x1="355.8" y1="527.5" x2="355.4" y2="526.2" stroke="#ff5a1c" stroke-opacity="0.85" stroke-width="0.8"/><line x1="358.7" y1="526.8" x2="358.5" y2="525.5" stroke="#ff5a1c" stroke-opacity="0.85" stroke-width="0.8"/><line x1="361.7" y1="526.3" x2="361.6" y2="525.0" stroke="#ff5a1c" stroke-opacity="0.85" stroke-width="0.8"/><line x1="364.7" y1="526.1" x2="364.6" y2="523.9" stroke="#ff5a1c" stroke-opacity="0.85" stroke-width="0.8"/><line x1="367.8" y1="526.0" x2="367.8" y2="524.7" stroke="#ff5a1c" stroke-opacity="0.85" stroke-width="0.8"/><line x1="370.8" y1="526.2" x2="370.9" y2="524.9" stroke="#ff5a1c" stroke-opacity="0.85" stroke-width="0.8"/><line x1="373.8" y1="526.5" x2="374.0" y2="525.2" stroke="#ff5a1c" stroke-opacity="0.85" stroke-width="0.8"/><line x1="376.8" y1="527.1" x2="377.0" y2="525.8" stroke="#ff5a1c" stroke-opacity="0.85" stroke-width="0.8"/><line x1="379.7" y1="527.9" x2="380.3" y2="525.8" stroke="#ff5a1c" stroke-opacity="0.85" stroke-width="0.8"/><line x1="382.6" y1="528.9" x2="383.0" y2="527.7" stroke="#ff5a1c" stroke-opacity="0.85" stroke-width="0.8"/><line x1="385.3" y1="530.0" x2="385.9" y2="528.9" stroke="#ff5a1c" stroke-opacity="0.85" stroke-width="0.8"/><line x1="388.0" y1="531.4" x2="388.7" y2="530.3" stroke="#ff5a1c" stroke-opacity="0.85" stroke-width="0.8"/><line x1="390.6" y1="533.0" x2="391.3" y2="531.9" stroke="#ff5a1c" stroke-opacity="0.85" stroke-width="0.8"/><line x1="393.1" y1="534.7" x2="394.4" y2="532.9" stroke="#ff5a1c" stroke-opacity="0.85" stroke-width="0.8"/><line x1="395.5" y1="536.6" x2="396.3" y2="535.6" stroke="#ff5a1c" stroke-opacity="0.85" stroke-width="0.8"/><rect x="339.2" y="538.6" width="1.6" height="2.6" fill="#ff5a1c"/><rect x="394.6" y="538.2" width="3" height="2.6" fill="#ff5a1c" fill-opacity="0.85"/><rect x="353" y="527.6" width="28.6" height="15" fill="#0b0b0b" fill-opacity="0.8"/><text x="367.6" y="529.6" font-family="Liberation Sans, sans-serif" font-size="3.4" fill="#ff5a1c" fill-opacity="0.7" text-anchor="middle">dBm</text><text x="367.4" y="538.2" font-family="Liberation Sans, sans-serif" font-size="4" fill="#ff5a1c" fill-opacity="0.7" text-anchor="middle">PWR LVL</text><text x="368" y="537.4" font-family="Liberation Sans, sans-serif" font-weight="bold" font-size="7" fill="#22d422" text-anchor="middle">-71.4</text><path d="M373.7 542.4 L376.4 542.4 L385.9 511.6 L384.7 511.4 Z" fill="#ea1616"/>
 </g>
 <!-- up arrow -->
 <path d="M422.1 518.8 L427.3 524.4 L424.6 524.4 L424.6 529.6 L419.6 529.6 L419.6 524.4 L416.9 524.4 Z" fill="#8c1c36"/>
 <!-- constellation icon -->
 <rect x="436.3" y="515.7" width="18.8" height="18.4" fill="#eee2e6"/>
 <path d="M445.7 515.7 V534.1" stroke="#e0d4da" stroke-width="0.7"/><path d="M436.3 528.2 H455.1" stroke="#b4d0e4" stroke-width="0.8"/>
 <g fill="#18a418"><rect x="438" y="517.4" width="1.8" height="1.8"/><rect x="451.6" y="517.4" width="1.8" height="1.8"/><rect x="438" y="531" width="1.8" height="1.8"/><rect x="451.6" y="531" width="1.8" height="1.8"/></g>
 <!-- clear icon -->
 <path d="M540.8 533.8 L543.8 530.6 L549.6 530.6 L549.6 537 L543.8 537 Z" fill="#2a2a2a"/>
 <path d="M545 532.4 L548 535.2 M548 532.4 L545 535.2" stroke="#d0d0d0" stroke-width="0.8"/>
</svg>

</div></body></html>
